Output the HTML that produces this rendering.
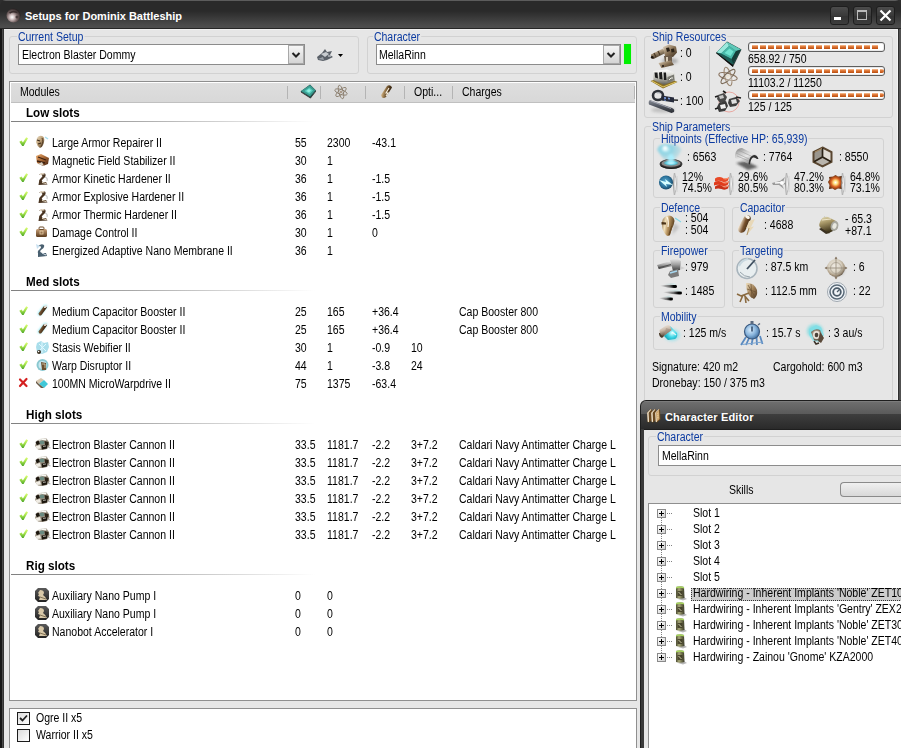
<!DOCTYPE html><html><head><meta charset="utf-8"><style>
*{margin:0;padding:0;box-sizing:content-box}
html,body{width:901px;height:748px;overflow:hidden;background:#2e2e2e}
body{position:relative;font-family:"Liberation Sans",sans-serif;font-size:11px;color:#000}
.t{position:absolute;white-space:pre;line-height:13px;font-size:12px;transform:scaleX(0.877);transform-origin:0 0}
.b{font-weight:bold;transform:scaleX(0.97)}
.glab{color:#0b3aa0;background:#e6e6e6;padding:0 1px;margin-left:-1px}
.grp{position:absolute;border:1px solid #d2d2d2;border-radius:3px}
.ic{position:absolute;overflow:visible}
</style></head><body><div style="position:absolute;left:0px;top:0px;width:901px;height:29px;background:linear-gradient(#5c5c5c 0px,#5c5c5c 1px,#2a2a2a 1px,#2a2a2a 11px,#4a4a4a 25px,#4e4e4e 28px,#262626 28px);border-radius:6px 6px 0 0"></div>
<svg class="ic" style="left:6px;top:8px" width="15" height="15" viewBox="0 0 15 15"><defs><filter id="sb" x="-30%" y="-30%" width="160%" height="160%"><feGaussianBlur stdDeviation="0.45"/></filter><filter id="sb2" x="-50%" y="-50%" width="200%" height="200%"><feGaussianBlur stdDeviation="1.5"/></filter></defs><defs><radialGradient id="r1" cx="0.4" cy="0.62" r="0.62"><stop offset="0" stop-color="#ffffff" /><stop offset="0.25" stop-color="#d8c8c8" /><stop offset="0.6" stop-color="#7a6868" /><stop offset="1" stop-color="#2a2222" /></radialGradient></defs><circle cx="7.5" cy="7.5" r="7" fill="url(#r1)"/><g filter="url(#sb)"><path d="M3.5 5 Q7 2.5 11.5 4.5" stroke="#3a2e2e" stroke-width="1.6" fill="none"/><circle cx="11" cy="9" r="1.5" fill="#4a3c3c"/></g></svg>
<div class="t b" style="left:25px;top:10px;font-size:11px;color:#fff;transform:none">Setups for Dominix Battleship</div>
<div style="position:absolute;left:830px;top:6px;width:19px;height:19px;border:1px solid #1e1e1e;border-radius:3px;box-sizing:border-box;background:linear-gradient(#4c4c4c,#3a3a3a 50%,#333 51%,#3c3c3c)"></div>
<div style="position:absolute;left:853px;top:6px;width:19px;height:19px;border:1px solid #1e1e1e;border-radius:3px;box-sizing:border-box;background:linear-gradient(#4c4c4c,#3a3a3a 50%,#333 51%,#3c3c3c)"></div>
<div style="position:absolute;left:876px;top:6px;width:19px;height:19px;border:1px solid #1e1e1e;border-radius:3px;box-sizing:border-box;background:linear-gradient(#4c4c4c,#3a3a3a 50%,#333 51%,#3c3c3c)"></div>
<div style="position:absolute;left:834px;top:17px;width:7px;height:3px;background:#fff"></div>
<div style="position:absolute;left:857px;top:10px;width:10px;height:10px;border:1px solid #bbb;border-top:2px solid #bbb;box-sizing:border-box"></div>
<svg class="ic" style="left:879px;top:9px" width="13" height="13" viewBox="0 0 13 13"><path d="M1.5 1.5L11.5 11.5M11.5 1.5L1.5 11.5" stroke="#fff" stroke-width="2.2"/></svg>
<div style="position:absolute;left:0px;top:29px;width:901px;height:719px;background:linear-gradient(90deg,#161616 0,#161616 2px,#4a4a4a 2px,#4a4a4a 3px,#343434 3px,#343434 4px,transparent 4px,transparent 898px,#2e2e2e 898px,#2e2e2e 899px,#505050 899px)"></div>
<div style="position:absolute;left:4px;top:29px;width:894px;height:719px;background:#e6e6e6;border-top:1px solid #efefef;border-right:1px solid #f2f2f2;box-sizing:border-box"></div>
<div class="grp" style="left:9px;top:36px;width:348px;height:36px"></div>
<div class="t glab" style="left:18px;top:31px">Current Setup</div>
<div style="position:absolute;left:18px;top:44px;width:287px;height:21px;border:1px solid #8c8c8c;background:#fff;box-sizing:border-box"></div>
<div class="t " style="left:22px;top:49px;">Electron Blaster Dommy</div>
<div style="position:absolute;left:288px;top:45px;width:16px;height:19px;border:1px solid #a8a8a8;box-sizing:border-box;background:linear-gradient(#f6f6f6,#d4d4d4)"></div>
<svg class="ic" style="left:291px;top:51px" width="10" height="8" viewBox="0 0 10 8"><path d="M1.5 2L5 5.5L8.5 2" stroke="#222" stroke-width="2" fill="none"/></svg>
<svg class="ic" style="left:316px;top:48px" width="18" height="14" viewBox="0 0 18 14"><path d="M1 9 L6 5 L9 1 L11 4 L16 3 L14 7 L17 9 L11 12 L7 13 L2 12Z" fill="#5a6068"/><path d="M5 6 L10 4 L13 6 L9 9Z" fill="#c8ccd0"/><path d="M2 11 L7 9 L8 12Z" fill="#9aa0a8"/><path d="M12 8 L15 8" stroke="#e0e4e8" stroke-width="1"/></svg>
<svg class="ic" style="left:338px;top:54px" width="5" height="3" viewBox="0 0 5 3"><path d="M0 0H5L2.5 3Z" fill="#000"/></svg>
<div class="grp" style="left:367px;top:36px;width:268px;height:36px"></div>
<div class="t glab" style="left:374px;top:31px">Character</div>
<div style="position:absolute;left:376px;top:44px;width:245px;height:21px;border:1px solid #8c8c8c;background:#fff;box-sizing:border-box"></div>
<div class="t " style="left:379px;top:49px;">MellaRinn</div>
<div style="position:absolute;left:603px;top:45px;width:17px;height:19px;border:1px solid #a8a8a8;box-sizing:border-box;background:linear-gradient(#f6f6f6,#d4d4d4)"></div>
<svg class="ic" style="left:606px;top:51px" width="10" height="8" viewBox="0 0 10 8"><path d="M1.5 2L5 5.5L8.5 2" stroke="#222" stroke-width="2" fill="none"/></svg>
<div style="position:absolute;left:624px;top:44px;width:7px;height:20px;background:#00f000;box-shadow:0 0 1px #b0f0b0"></div>
<div style="position:absolute;left:9px;top:81px;width:628px;height:620px;border:1px solid #8f8f8f;background:#fff;box-sizing:border-box"></div>
<div style="position:absolute;left:11px;top:83px;width:624px;height:20px;background:linear-gradient(#dedede,#d8d8d8);border-bottom:1px solid #c0c0c0;box-sizing:border-box"></div>
<div style="position:absolute;left:287px;top:86px;width:1px;height:13px;background:#b4b4b4"></div>
<div style="position:absolute;left:320px;top:86px;width:1px;height:13px;background:#b4b4b4"></div>
<div style="position:absolute;left:365px;top:86px;width:1px;height:13px;background:#b4b4b4"></div>
<div style="position:absolute;left:404px;top:86px;width:1px;height:13px;background:#b4b4b4"></div>
<div style="position:absolute;left:452px;top:86px;width:1px;height:13px;background:#b4b4b4"></div>
<div style="position:absolute;left:634px;top:86px;width:1px;height:13px;background:#b4b4b4"></div>
<div class="t " style="left:20px;top:86px;">Modules</div>
<div class="t " style="left:414px;top:86px;">Opti...</div>
<div class="t " style="left:462px;top:86px;">Charges</div>
<svg class="ic" style="left:300px;top:84px" width="17" height="15" viewBox="0 0 17 15"><path d="M10 0.5 L16 6.5 L10.5 14 L0.5 7.5Z" fill="#1c4c48"/><path d="M10 1 L15.5 6.3 L10 12.5 L1 7Z" fill="#3c9c90"/><path d="M9.5 3.5 L13 6.5 L9.5 10 L4.5 7Z" fill="#58d0c0"/><path d="M9 5 L11 6.5 L9 8.5 L6.5 7Z" fill="#90f0e0"/><path d="M1 7.5 L10.5 13.5 L10.5 14.5 L1 8.5Z" fill="#383838"/><path d="M10.5 13.5 L16 6.5 L16 7.5 L10.5 14.5Z" fill="#202020"/></svg>
<svg class="ic" style="left:333px;top:84px" width="16" height="16" viewBox="0 0 16 16"><g fill="none" stroke="#8c8070" stroke-width="0.9"><ellipse cx="8" cy="8" rx="6.5" ry="2.4" transform="rotate(20 8 8)"/><ellipse cx="8" cy="8" rx="7" ry="2.2" transform="rotate(75 8 8)"/><ellipse cx="8" cy="8" rx="6.5" ry="2.4" transform="rotate(-40 8 8)"/></g><circle cx="8" cy="8" r="1.2" fill="#a89888"/></svg>
<svg class="ic" style="left:380px;top:84px" width="13" height="15" viewBox="0 0 13 15"><defs><linearGradient id="l2" x1="0" y1="0" x2="1" y2="0.3"><stop offset="0" stop-color="#fff4e0"/><stop offset="0.35" stop-color="#b89868"/><stop offset="0.7" stop-color="#5a4020"/><stop offset="1" stop-color="#2a1c0c"/></linearGradient></defs><path d="M1 11 L7 2 Q9 0.5 11 2 L12 3.5 L6 13 Q4 14.5 2 13.5Z" fill="url(#l2)"/><path d="M9 4 L6 9 L8 9 L6 12" stroke="#f8f0e0" stroke-width="1.1" fill="none"/></svg>
<div class="t b" style="left:26px;top:107px;">Low slots</div>
<div style="position:absolute;left:11px;top:121px;width:304px;height:1px;background:linear-gradient(90deg,#808080,#a8a8a8 40%,#fff)"></div>
<svg class="ic" style="left:19px;top:137px" width="10" height="10" viewBox="0 0 10 10"><defs><linearGradient id="l3" x1="0" y1="0" x2="0" y2="1"><stop offset="0" stop-color="#e0ff78"/><stop offset="0.5" stop-color="#a0e048"/><stop offset="1" stop-color="#50a828"/></linearGradient></defs><path d="M0.3 4.8 L2.6 3.6 L3.9 5.6 L7.2 0.3 L9 1.3 L4.6 8.9 L3.2 8.9Z" fill="url(#l3)"/></svg>
<svg class="ic" style="left:35px;top:135px" width="14" height="14" viewBox="0 0 14 14"><defs><linearGradient id="l4" x1="0" y1="0" x2="1" y2="1"><stop offset="0" stop-color="#f0e4cc"/><stop offset="0.5" stop-color="#b89a70"/><stop offset="1" stop-color="#3a2a18"/></linearGradient></defs><path d="M2 3 Q4 0 7 1 Q10 2 9 7 Q8 12 5 13 Q2 11 1 7Z" fill="url(#l4)"/><path d="M2 5 L5 6 M3 9 L6 8" stroke="#3a2818" stroke-width="1.2"/><path d="M7 3 Q9 6 6 12" stroke="#5a4028" stroke-width="1" fill="none"/><path d="M10 2 L13 4" stroke="#a8e0f0" stroke-width="1.5"/></svg>
<div class="t " style="left:52px;top:137px;">Large Armor Repairer II</div>
<div class="t " style="left:295px;top:137px;">55</div>
<div class="t " style="left:327px;top:137px;">2300</div>
<div class="t " style="left:372px;top:137px;">-43.1</div>
<div class="t " style="left:411px;top:137px;"></div>
<div class="t " style="left:459px;top:137px;"></div>
<svg class="ic" style="left:35px;top:153px" width="15" height="14" viewBox="0 0 15 14"><defs><linearGradient id="l5" x1="0" y1="0" x2="1" y2="1"><stop offset="0" stop-color="#f0b070"/><stop offset="0.5" stop-color="#a06030"/><stop offset="1" stop-color="#402010"/></linearGradient></defs><path d="M1 3 L6 1 L14 5 L13 11 L8 13 L2 10Z" fill="url(#l5)"/><path d="M3 4 L11 7 M2 8 L10 10" stroke="#3a2010" stroke-width="1.3"/><path d="M3 11 L7 9 L9 13Z" fill="#d8d0c0"/></svg>
<div class="t " style="left:52px;top:155px;">Magnetic Field Stabilizer II</div>
<div class="t " style="left:295px;top:155px;">30</div>
<div class="t " style="left:327px;top:155px;">1</div>
<div class="t " style="left:372px;top:155px;"></div>
<div class="t " style="left:411px;top:155px;"></div>
<div class="t " style="left:459px;top:155px;"></div>
<svg class="ic" style="left:19px;top:173px" width="10" height="10" viewBox="0 0 10 10"><defs><linearGradient id="l6" x1="0" y1="0" x2="0" y2="1"><stop offset="0" stop-color="#e0ff78"/><stop offset="0.5" stop-color="#a0e048"/><stop offset="1" stop-color="#50a828"/></linearGradient></defs><path d="M0.3 4.8 L2.6 3.6 L3.9 5.6 L7.2 0.3 L9 1.3 L4.6 8.9 L3.2 8.9Z" fill="url(#l6)"/></svg>
<svg class="ic" style="left:37px;top:172px" width="12" height="14" viewBox="0 0 12 14"><defs><filter id="hb" x="-20%" y="-20%" width="140%" height="140%"><feGaussianBlur stdDeviation="0.3"/></filter></defs><g filter="url(#hb)"><path d="M2 3 Q5 0 8 1.5 Q10 4 6 7 Q3.5 9 6 10 L9 10 L10.5 12.5 L1.5 13 L2 10 Q1.5 8 4 6 Q6.5 4 4.5 3Z" fill="#4a3420"/><path d="M3 2.8 Q5 1.2 7.5 2" stroke="#f0e4d0" stroke-width="1.3" fill="none"/><path d="M5 10.5 L9.5 11.5" stroke="#f0e4d0" stroke-width="1.1"/><path d="M8 5 Q11 6 10 9" stroke="#c8c8c8" stroke-width="1.2" fill="none"/></g></svg>
<div class="t " style="left:52px;top:173px;">Armor Kinetic Hardener II</div>
<div class="t " style="left:295px;top:173px;">36</div>
<div class="t " style="left:327px;top:173px;">1</div>
<div class="t " style="left:372px;top:173px;">-1.5</div>
<div class="t " style="left:411px;top:173px;"></div>
<div class="t " style="left:459px;top:173px;"></div>
<svg class="ic" style="left:19px;top:191px" width="10" height="10" viewBox="0 0 10 10"><defs><linearGradient id="l7" x1="0" y1="0" x2="0" y2="1"><stop offset="0" stop-color="#e0ff78"/><stop offset="0.5" stop-color="#a0e048"/><stop offset="1" stop-color="#50a828"/></linearGradient></defs><path d="M0.3 4.8 L2.6 3.6 L3.9 5.6 L7.2 0.3 L9 1.3 L4.6 8.9 L3.2 8.9Z" fill="url(#l7)"/></svg>
<svg class="ic" style="left:37px;top:190px" width="12" height="14" viewBox="0 0 12 14"><defs><filter id="hb" x="-20%" y="-20%" width="140%" height="140%"><feGaussianBlur stdDeviation="0.3"/></filter></defs><g filter="url(#hb)"><path d="M2 3 Q5 0 8 1.5 Q10 4 6 7 Q3.5 9 6 10 L9 10 L10.5 12.5 L1.5 13 L2 10 Q1.5 8 4 6 Q6.5 4 4.5 3Z" fill="#4a3420"/><path d="M3 2.8 Q5 1.2 7.5 2" stroke="#f0e4d0" stroke-width="1.3" fill="none"/><path d="M5 10.5 L9.5 11.5" stroke="#f0e4d0" stroke-width="1.1"/><path d="M8 5 Q11 6 10 9" stroke="#c8c8c8" stroke-width="1.2" fill="none"/></g></svg>
<div class="t " style="left:52px;top:191px;">Armor Explosive Hardener II</div>
<div class="t " style="left:295px;top:191px;">36</div>
<div class="t " style="left:327px;top:191px;">1</div>
<div class="t " style="left:372px;top:191px;">-1.5</div>
<div class="t " style="left:411px;top:191px;"></div>
<div class="t " style="left:459px;top:191px;"></div>
<svg class="ic" style="left:19px;top:209px" width="10" height="10" viewBox="0 0 10 10"><defs><linearGradient id="l8" x1="0" y1="0" x2="0" y2="1"><stop offset="0" stop-color="#e0ff78"/><stop offset="0.5" stop-color="#a0e048"/><stop offset="1" stop-color="#50a828"/></linearGradient></defs><path d="M0.3 4.8 L2.6 3.6 L3.9 5.6 L7.2 0.3 L9 1.3 L4.6 8.9 L3.2 8.9Z" fill="url(#l8)"/></svg>
<svg class="ic" style="left:37px;top:208px" width="12" height="14" viewBox="0 0 12 14"><defs><filter id="hb" x="-20%" y="-20%" width="140%" height="140%"><feGaussianBlur stdDeviation="0.3"/></filter></defs><g filter="url(#hb)"><path d="M2 3 Q5 0 8 1.5 Q10 4 6 7 Q3.5 9 6 10 L9 10 L10.5 12.5 L1.5 13 L2 10 Q1.5 8 4 6 Q6.5 4 4.5 3Z" fill="#4a3420"/><path d="M3 2.8 Q5 1.2 7.5 2" stroke="#f0e4d0" stroke-width="1.3" fill="none"/><path d="M5 10.5 L9.5 11.5" stroke="#f0e4d0" stroke-width="1.1"/><path d="M8 5 Q11 6 10 9" stroke="#c8c8c8" stroke-width="1.2" fill="none"/></g></svg>
<div class="t " style="left:52px;top:209px;">Armor Thermic Hardener II</div>
<div class="t " style="left:295px;top:209px;">36</div>
<div class="t " style="left:327px;top:209px;">1</div>
<div class="t " style="left:372px;top:209px;">-1.5</div>
<div class="t " style="left:411px;top:209px;"></div>
<div class="t " style="left:459px;top:209px;"></div>
<svg class="ic" style="left:19px;top:227px" width="10" height="10" viewBox="0 0 10 10"><defs><linearGradient id="l9" x1="0" y1="0" x2="0" y2="1"><stop offset="0" stop-color="#e0ff78"/><stop offset="0.5" stop-color="#a0e048"/><stop offset="1" stop-color="#50a828"/></linearGradient></defs><path d="M0.3 4.8 L2.6 3.6 L3.9 5.6 L7.2 0.3 L9 1.3 L4.6 8.9 L3.2 8.9Z" fill="url(#l9)"/></svg>
<svg class="ic" style="left:35px;top:226px" width="13" height="12" viewBox="0 0 13 12"><defs><linearGradient id="l10" x1="0" y1="0" x2="0" y2="1"><stop offset="0" stop-color="#c8a078"/><stop offset="1" stop-color="#5a3a1c"/></linearGradient></defs><rect x="1" y="3" width="11" height="8" rx="1.5" fill="url(#l10)"/><rect x="4" y="1" width="5" height="2.5" rx="1" fill="none" stroke="#6a4a2a" stroke-width="1"/><rect x="5" y="5" width="3" height="3" fill="none" stroke="#e8d0a8" stroke-width="0.8"/></svg>
<div class="t " style="left:52px;top:227px;">Damage Control II</div>
<div class="t " style="left:295px;top:227px;">30</div>
<div class="t " style="left:327px;top:227px;">1</div>
<div class="t " style="left:372px;top:227px;">0</div>
<div class="t " style="left:411px;top:227px;"></div>
<div class="t " style="left:459px;top:227px;"></div>
<svg class="ic" style="left:35px;top:243px" width="14" height="15" viewBox="0 0 14 15"><path d="M2 4 Q6 0 9 2 Q10 5 6 7 Q4 9 7 10 L11 10 L12 13 L3 14 L3 10 Q2 8 5 6 Q7 4 5 3Z" fill="#4a6070"/><path d="M1 1 L5 3 L2 6Z" fill="#c8e0f0"/><path d="M7 10 L11 12" stroke="#e0e8f0" stroke-width="1"/></svg>
<div class="t " style="left:52px;top:245px;">Energized Adaptive Nano Membrane II</div>
<div class="t " style="left:295px;top:245px;">36</div>
<div class="t " style="left:327px;top:245px;">1</div>
<div class="t " style="left:372px;top:245px;"></div>
<div class="t " style="left:411px;top:245px;"></div>
<div class="t " style="left:459px;top:245px;"></div>
<div class="t b" style="left:26px;top:276px;">Med slots</div>
<div style="position:absolute;left:11px;top:290px;width:304px;height:1px;background:linear-gradient(90deg,#808080,#a8a8a8 40%,#fff)"></div>
<svg class="ic" style="left:19px;top:306px" width="10" height="10" viewBox="0 0 10 10"><defs><linearGradient id="l11" x1="0" y1="0" x2="0" y2="1"><stop offset="0" stop-color="#e0ff78"/><stop offset="0.5" stop-color="#a0e048"/><stop offset="1" stop-color="#50a828"/></linearGradient></defs><path d="M0.3 4.8 L2.6 3.6 L3.9 5.6 L7.2 0.3 L9 1.3 L4.6 8.9 L3.2 8.9Z" fill="url(#l11)"/></svg>
<svg class="ic" style="left:36px;top:304px" width="13" height="13" viewBox="0 0 13 13"><defs><filter id="glw" x="-50%" y="-50%" width="200%" height="200%"><feGaussianBlur stdDeviation="1"/></filter></defs><path d="M2 9 L8 1.5 Q10 0.5 11.5 2 L5 11 Q3 12 2 10.5Z" fill="#60e0f0" opacity="0.7" filter="url(#glw)"/><defs><linearGradient id="l12" x1="0" y1="0" x2="1" y2="0.5"><stop offset="0" stop-color="#2a1a0c"/><stop offset="0.4" stop-color="#7a5a3a"/><stop offset="0.7" stop-color="#4a3018"/><stop offset="1" stop-color="#1a0e04"/></linearGradient></defs><path d="M2.5 9.5 L7.5 2.5 Q9 1.3 10.5 2.5 L11 3.5 L5.5 11 Q4 12 3 11Z" fill="url(#l12)"/><ellipse cx="9.5" cy="2.6" rx="1.8" ry="1.1" transform="rotate(-35 9.5 2.6)" fill="#e8e0d8"/></svg>
<div class="t " style="left:52px;top:306px;">Medium Capacitor Booster II</div>
<div class="t " style="left:295px;top:306px;">25</div>
<div class="t " style="left:327px;top:306px;">165</div>
<div class="t " style="left:372px;top:306px;">+36.4</div>
<div class="t " style="left:411px;top:306px;"></div>
<div class="t " style="left:459px;top:306px;">Cap Booster 800</div>
<svg class="ic" style="left:19px;top:324px" width="10" height="10" viewBox="0 0 10 10"><defs><linearGradient id="l13" x1="0" y1="0" x2="0" y2="1"><stop offset="0" stop-color="#e0ff78"/><stop offset="0.5" stop-color="#a0e048"/><stop offset="1" stop-color="#50a828"/></linearGradient></defs><path d="M0.3 4.8 L2.6 3.6 L3.9 5.6 L7.2 0.3 L9 1.3 L4.6 8.9 L3.2 8.9Z" fill="url(#l13)"/></svg>
<svg class="ic" style="left:36px;top:322px" width="13" height="13" viewBox="0 0 13 13"><defs><filter id="glw" x="-50%" y="-50%" width="200%" height="200%"><feGaussianBlur stdDeviation="1"/></filter></defs><path d="M2 9 L8 1.5 Q10 0.5 11.5 2 L5 11 Q3 12 2 10.5Z" fill="#60e0f0" opacity="0.7" filter="url(#glw)"/><defs><linearGradient id="l14" x1="0" y1="0" x2="1" y2="0.5"><stop offset="0" stop-color="#2a1a0c"/><stop offset="0.4" stop-color="#7a5a3a"/><stop offset="0.7" stop-color="#4a3018"/><stop offset="1" stop-color="#1a0e04"/></linearGradient></defs><path d="M2.5 9.5 L7.5 2.5 Q9 1.3 10.5 2.5 L11 3.5 L5.5 11 Q4 12 3 11Z" fill="url(#l14)"/><ellipse cx="9.5" cy="2.6" rx="1.8" ry="1.1" transform="rotate(-35 9.5 2.6)" fill="#e8e0d8"/></svg>
<div class="t " style="left:52px;top:324px;">Medium Capacitor Booster II</div>
<div class="t " style="left:295px;top:324px;">25</div>
<div class="t " style="left:327px;top:324px;">165</div>
<div class="t " style="left:372px;top:324px;">+36.4</div>
<div class="t " style="left:411px;top:324px;"></div>
<div class="t " style="left:459px;top:324px;">Cap Booster 800</div>
<svg class="ic" style="left:19px;top:342px" width="10" height="10" viewBox="0 0 10 10"><defs><linearGradient id="l15" x1="0" y1="0" x2="0" y2="1"><stop offset="0" stop-color="#e0ff78"/><stop offset="0.5" stop-color="#a0e048"/><stop offset="1" stop-color="#50a828"/></linearGradient></defs><path d="M0.3 4.8 L2.6 3.6 L3.9 5.6 L7.2 0.3 L9 1.3 L4.6 8.9 L3.2 8.9Z" fill="url(#l15)"/></svg>
<svg class="ic" style="left:35px;top:340px" width="15" height="15" viewBox="0 0 15 15"><path d="M2 3 L6 1 L9 3 L13 2 L14 7 L12 12 L7 14 L2 12 L1 7Z" fill="#9ad8e8" opacity="0.85"/><path d="M4 4 L11 11 M11 4 L4 11 M7 2 L7 13" stroke="#e0f8ff" stroke-width="1"/><circle cx="4" cy="12" r="2" fill="#3a3020"/><circle cx="3.6" cy="11.5" r="0.8" fill="#fff"/></svg>
<div class="t " style="left:52px;top:342px;">Stasis Webifier II</div>
<div class="t " style="left:295px;top:342px;">30</div>
<div class="t " style="left:327px;top:342px;">1</div>
<div class="t " style="left:372px;top:342px;">-0.9</div>
<div class="t " style="left:411px;top:342px;">10</div>
<div class="t " style="left:459px;top:342px;"></div>
<svg class="ic" style="left:19px;top:360px" width="10" height="10" viewBox="0 0 10 10"><defs><linearGradient id="l16" x1="0" y1="0" x2="0" y2="1"><stop offset="0" stop-color="#e0ff78"/><stop offset="0.5" stop-color="#a0e048"/><stop offset="1" stop-color="#50a828"/></linearGradient></defs><path d="M0.3 4.8 L2.6 3.6 L3.9 5.6 L7.2 0.3 L9 1.3 L4.6 8.9 L3.2 8.9Z" fill="url(#l16)"/></svg>
<svg class="ic" style="left:36px;top:358px" width="14" height="14" viewBox="0 0 14 14"><circle cx="6.5" cy="7" r="6" fill="#8ac8d0"/><circle cx="6.5" cy="7" r="4" fill="#c8e8f0"/><path d="M5 4 L10 5 L10 12 L6 12Z" fill="#6a5030"/><path d="M6 6 L9 6 L9 10" stroke="#e0d0b0" stroke-width="0.8" fill="none"/></svg>
<div class="t " style="left:52px;top:360px;">Warp Disruptor II</div>
<div class="t " style="left:295px;top:360px;">44</div>
<div class="t " style="left:327px;top:360px;">1</div>
<div class="t " style="left:372px;top:360px;">-3.8</div>
<div class="t " style="left:411px;top:360px;">24</div>
<div class="t " style="left:459px;top:360px;"></div>
<svg class="ic" style="left:19px;top:378px" width="9" height="9" viewBox="0 0 9 9"><path d="M1 1.5L7.5 8M7.5 1L1 8" stroke="#d42020" stroke-width="2.2" stroke-linecap="round"/></svg>
<svg class="ic" style="left:35px;top:377px" width="14" height="12" viewBox="0 0 14 12"><path d="M1 4 L6 1 L9 3 L4 7Z" fill="#d8c8b0"/><path d="M4 7 L9 3 L13 7 L9 11Z" fill="#40c8d8"/><path d="M1 4 L4 7 L9 11 L6 11 L1 6Z" fill="#6a5a48"/></svg>
<div class="t " style="left:52px;top:378px;">100MN MicroWarpdrive II</div>
<div class="t " style="left:295px;top:378px;">75</div>
<div class="t " style="left:327px;top:378px;">1375</div>
<div class="t " style="left:372px;top:378px;">-63.4</div>
<div class="t " style="left:411px;top:378px;"></div>
<div class="t " style="left:459px;top:378px;"></div>
<div class="t b" style="left:26px;top:409px;">High slots</div>
<div style="position:absolute;left:11px;top:423px;width:304px;height:1px;background:linear-gradient(90deg,#808080,#a8a8a8 40%,#fff)"></div>
<svg class="ic" style="left:19px;top:439px" width="10" height="10" viewBox="0 0 10 10"><defs><linearGradient id="l17" x1="0" y1="0" x2="0" y2="1"><stop offset="0" stop-color="#e0ff78"/><stop offset="0.5" stop-color="#a0e048"/><stop offset="1" stop-color="#50a828"/></linearGradient></defs><path d="M0.3 4.8 L2.6 3.6 L3.9 5.6 L7.2 0.3 L9 1.3 L4.6 8.9 L3.2 8.9Z" fill="url(#l17)"/></svg>
<svg class="ic" style="left:34px;top:437px" width="17" height="14" viewBox="0 0 17 14"><defs><filter id="bb" x="-20%" y="-20%" width="140%" height="140%"><feGaussianBlur stdDeviation="0.5"/></filter></defs><g filter="url(#bb)"><path d="M2.5 4 Q7 0.5 12.5 1.5 L15 5 L15.5 9 L13 12 Q8 13.5 4 12.5 L1 9 Z" fill="#9a9080"/><path d="M4 2.5 Q9 0.5 12.5 1.8 L12 3.5 Q8 2.5 4.5 4Z" fill="#f8f8f4"/><path d="M1.5 5 L4.5 3.5 L6 6.5 L3 8.5Z" fill="#1e1810"/><ellipse cx="8" cy="5.5" rx="2.4" ry="2" fill="#6a8a80"/><path d="M10.5 4 L14.5 5 L14.5 8 L11 8.5Z" fill="#2a2014"/><path d="M1.5 9 L6 8 L7 11.5 L3 12Z" fill="#f0ece4"/><path d="M7.5 8.5 L13.5 8 L13 11.5 L8 12.5Z" fill="#1e1810"/><path d="M5 3 L8 2.5 M9 9.5 L12 9" stroke="#d8d8d0" stroke-width="0.7"/><path d="M13.5 10 L16.5 11" stroke="#b8b8b8" stroke-width="1.2"/></g></svg>
<div class="t " style="left:52px;top:439px;">Electron Blaster Cannon II</div>
<div class="t " style="left:295px;top:439px;">33.5</div>
<div class="t " style="left:327px;top:439px;">1181.7</div>
<div class="t " style="left:372px;top:439px;">-2.2</div>
<div class="t " style="left:411px;top:439px;">3+7.2</div>
<div class="t " style="left:459px;top:439px;">Caldari Navy Antimatter Charge L</div>
<svg class="ic" style="left:19px;top:457px" width="10" height="10" viewBox="0 0 10 10"><defs><linearGradient id="l18" x1="0" y1="0" x2="0" y2="1"><stop offset="0" stop-color="#e0ff78"/><stop offset="0.5" stop-color="#a0e048"/><stop offset="1" stop-color="#50a828"/></linearGradient></defs><path d="M0.3 4.8 L2.6 3.6 L3.9 5.6 L7.2 0.3 L9 1.3 L4.6 8.9 L3.2 8.9Z" fill="url(#l18)"/></svg>
<svg class="ic" style="left:34px;top:455px" width="17" height="14" viewBox="0 0 17 14"><defs><filter id="bb" x="-20%" y="-20%" width="140%" height="140%"><feGaussianBlur stdDeviation="0.5"/></filter></defs><g filter="url(#bb)"><path d="M2.5 4 Q7 0.5 12.5 1.5 L15 5 L15.5 9 L13 12 Q8 13.5 4 12.5 L1 9 Z" fill="#9a9080"/><path d="M4 2.5 Q9 0.5 12.5 1.8 L12 3.5 Q8 2.5 4.5 4Z" fill="#f8f8f4"/><path d="M1.5 5 L4.5 3.5 L6 6.5 L3 8.5Z" fill="#1e1810"/><ellipse cx="8" cy="5.5" rx="2.4" ry="2" fill="#6a8a80"/><path d="M10.5 4 L14.5 5 L14.5 8 L11 8.5Z" fill="#2a2014"/><path d="M1.5 9 L6 8 L7 11.5 L3 12Z" fill="#f0ece4"/><path d="M7.5 8.5 L13.5 8 L13 11.5 L8 12.5Z" fill="#1e1810"/><path d="M5 3 L8 2.5 M9 9.5 L12 9" stroke="#d8d8d0" stroke-width="0.7"/><path d="M13.5 10 L16.5 11" stroke="#b8b8b8" stroke-width="1.2"/></g></svg>
<div class="t " style="left:52px;top:457px;">Electron Blaster Cannon II</div>
<div class="t " style="left:295px;top:457px;">33.5</div>
<div class="t " style="left:327px;top:457px;">1181.7</div>
<div class="t " style="left:372px;top:457px;">-2.2</div>
<div class="t " style="left:411px;top:457px;">3+7.2</div>
<div class="t " style="left:459px;top:457px;">Caldari Navy Antimatter Charge L</div>
<svg class="ic" style="left:19px;top:475px" width="10" height="10" viewBox="0 0 10 10"><defs><linearGradient id="l19" x1="0" y1="0" x2="0" y2="1"><stop offset="0" stop-color="#e0ff78"/><stop offset="0.5" stop-color="#a0e048"/><stop offset="1" stop-color="#50a828"/></linearGradient></defs><path d="M0.3 4.8 L2.6 3.6 L3.9 5.6 L7.2 0.3 L9 1.3 L4.6 8.9 L3.2 8.9Z" fill="url(#l19)"/></svg>
<svg class="ic" style="left:34px;top:473px" width="17" height="14" viewBox="0 0 17 14"><defs><filter id="bb" x="-20%" y="-20%" width="140%" height="140%"><feGaussianBlur stdDeviation="0.5"/></filter></defs><g filter="url(#bb)"><path d="M2.5 4 Q7 0.5 12.5 1.5 L15 5 L15.5 9 L13 12 Q8 13.5 4 12.5 L1 9 Z" fill="#9a9080"/><path d="M4 2.5 Q9 0.5 12.5 1.8 L12 3.5 Q8 2.5 4.5 4Z" fill="#f8f8f4"/><path d="M1.5 5 L4.5 3.5 L6 6.5 L3 8.5Z" fill="#1e1810"/><ellipse cx="8" cy="5.5" rx="2.4" ry="2" fill="#6a8a80"/><path d="M10.5 4 L14.5 5 L14.5 8 L11 8.5Z" fill="#2a2014"/><path d="M1.5 9 L6 8 L7 11.5 L3 12Z" fill="#f0ece4"/><path d="M7.5 8.5 L13.5 8 L13 11.5 L8 12.5Z" fill="#1e1810"/><path d="M5 3 L8 2.5 M9 9.5 L12 9" stroke="#d8d8d0" stroke-width="0.7"/><path d="M13.5 10 L16.5 11" stroke="#b8b8b8" stroke-width="1.2"/></g></svg>
<div class="t " style="left:52px;top:475px;">Electron Blaster Cannon II</div>
<div class="t " style="left:295px;top:475px;">33.5</div>
<div class="t " style="left:327px;top:475px;">1181.7</div>
<div class="t " style="left:372px;top:475px;">-2.2</div>
<div class="t " style="left:411px;top:475px;">3+7.2</div>
<div class="t " style="left:459px;top:475px;">Caldari Navy Antimatter Charge L</div>
<svg class="ic" style="left:19px;top:493px" width="10" height="10" viewBox="0 0 10 10"><defs><linearGradient id="l20" x1="0" y1="0" x2="0" y2="1"><stop offset="0" stop-color="#e0ff78"/><stop offset="0.5" stop-color="#a0e048"/><stop offset="1" stop-color="#50a828"/></linearGradient></defs><path d="M0.3 4.8 L2.6 3.6 L3.9 5.6 L7.2 0.3 L9 1.3 L4.6 8.9 L3.2 8.9Z" fill="url(#l20)"/></svg>
<svg class="ic" style="left:34px;top:491px" width="17" height="14" viewBox="0 0 17 14"><defs><filter id="bb" x="-20%" y="-20%" width="140%" height="140%"><feGaussianBlur stdDeviation="0.5"/></filter></defs><g filter="url(#bb)"><path d="M2.5 4 Q7 0.5 12.5 1.5 L15 5 L15.5 9 L13 12 Q8 13.5 4 12.5 L1 9 Z" fill="#9a9080"/><path d="M4 2.5 Q9 0.5 12.5 1.8 L12 3.5 Q8 2.5 4.5 4Z" fill="#f8f8f4"/><path d="M1.5 5 L4.5 3.5 L6 6.5 L3 8.5Z" fill="#1e1810"/><ellipse cx="8" cy="5.5" rx="2.4" ry="2" fill="#6a8a80"/><path d="M10.5 4 L14.5 5 L14.5 8 L11 8.5Z" fill="#2a2014"/><path d="M1.5 9 L6 8 L7 11.5 L3 12Z" fill="#f0ece4"/><path d="M7.5 8.5 L13.5 8 L13 11.5 L8 12.5Z" fill="#1e1810"/><path d="M5 3 L8 2.5 M9 9.5 L12 9" stroke="#d8d8d0" stroke-width="0.7"/><path d="M13.5 10 L16.5 11" stroke="#b8b8b8" stroke-width="1.2"/></g></svg>
<div class="t " style="left:52px;top:493px;">Electron Blaster Cannon II</div>
<div class="t " style="left:295px;top:493px;">33.5</div>
<div class="t " style="left:327px;top:493px;">1181.7</div>
<div class="t " style="left:372px;top:493px;">-2.2</div>
<div class="t " style="left:411px;top:493px;">3+7.2</div>
<div class="t " style="left:459px;top:493px;">Caldari Navy Antimatter Charge L</div>
<svg class="ic" style="left:19px;top:511px" width="10" height="10" viewBox="0 0 10 10"><defs><linearGradient id="l21" x1="0" y1="0" x2="0" y2="1"><stop offset="0" stop-color="#e0ff78"/><stop offset="0.5" stop-color="#a0e048"/><stop offset="1" stop-color="#50a828"/></linearGradient></defs><path d="M0.3 4.8 L2.6 3.6 L3.9 5.6 L7.2 0.3 L9 1.3 L4.6 8.9 L3.2 8.9Z" fill="url(#l21)"/></svg>
<svg class="ic" style="left:34px;top:509px" width="17" height="14" viewBox="0 0 17 14"><defs><filter id="bb" x="-20%" y="-20%" width="140%" height="140%"><feGaussianBlur stdDeviation="0.5"/></filter></defs><g filter="url(#bb)"><path d="M2.5 4 Q7 0.5 12.5 1.5 L15 5 L15.5 9 L13 12 Q8 13.5 4 12.5 L1 9 Z" fill="#9a9080"/><path d="M4 2.5 Q9 0.5 12.5 1.8 L12 3.5 Q8 2.5 4.5 4Z" fill="#f8f8f4"/><path d="M1.5 5 L4.5 3.5 L6 6.5 L3 8.5Z" fill="#1e1810"/><ellipse cx="8" cy="5.5" rx="2.4" ry="2" fill="#6a8a80"/><path d="M10.5 4 L14.5 5 L14.5 8 L11 8.5Z" fill="#2a2014"/><path d="M1.5 9 L6 8 L7 11.5 L3 12Z" fill="#f0ece4"/><path d="M7.5 8.5 L13.5 8 L13 11.5 L8 12.5Z" fill="#1e1810"/><path d="M5 3 L8 2.5 M9 9.5 L12 9" stroke="#d8d8d0" stroke-width="0.7"/><path d="M13.5 10 L16.5 11" stroke="#b8b8b8" stroke-width="1.2"/></g></svg>
<div class="t " style="left:52px;top:511px;">Electron Blaster Cannon II</div>
<div class="t " style="left:295px;top:511px;">33.5</div>
<div class="t " style="left:327px;top:511px;">1181.7</div>
<div class="t " style="left:372px;top:511px;">-2.2</div>
<div class="t " style="left:411px;top:511px;">3+7.2</div>
<div class="t " style="left:459px;top:511px;">Caldari Navy Antimatter Charge L</div>
<svg class="ic" style="left:19px;top:529px" width="10" height="10" viewBox="0 0 10 10"><defs><linearGradient id="l22" x1="0" y1="0" x2="0" y2="1"><stop offset="0" stop-color="#e0ff78"/><stop offset="0.5" stop-color="#a0e048"/><stop offset="1" stop-color="#50a828"/></linearGradient></defs><path d="M0.3 4.8 L2.6 3.6 L3.9 5.6 L7.2 0.3 L9 1.3 L4.6 8.9 L3.2 8.9Z" fill="url(#l22)"/></svg>
<svg class="ic" style="left:34px;top:527px" width="17" height="14" viewBox="0 0 17 14"><defs><filter id="bb" x="-20%" y="-20%" width="140%" height="140%"><feGaussianBlur stdDeviation="0.5"/></filter></defs><g filter="url(#bb)"><path d="M2.5 4 Q7 0.5 12.5 1.5 L15 5 L15.5 9 L13 12 Q8 13.5 4 12.5 L1 9 Z" fill="#9a9080"/><path d="M4 2.5 Q9 0.5 12.5 1.8 L12 3.5 Q8 2.5 4.5 4Z" fill="#f8f8f4"/><path d="M1.5 5 L4.5 3.5 L6 6.5 L3 8.5Z" fill="#1e1810"/><ellipse cx="8" cy="5.5" rx="2.4" ry="2" fill="#6a8a80"/><path d="M10.5 4 L14.5 5 L14.5 8 L11 8.5Z" fill="#2a2014"/><path d="M1.5 9 L6 8 L7 11.5 L3 12Z" fill="#f0ece4"/><path d="M7.5 8.5 L13.5 8 L13 11.5 L8 12.5Z" fill="#1e1810"/><path d="M5 3 L8 2.5 M9 9.5 L12 9" stroke="#d8d8d0" stroke-width="0.7"/><path d="M13.5 10 L16.5 11" stroke="#b8b8b8" stroke-width="1.2"/></g></svg>
<div class="t " style="left:52px;top:529px;">Electron Blaster Cannon II</div>
<div class="t " style="left:295px;top:529px;">33.5</div>
<div class="t " style="left:327px;top:529px;">1181.7</div>
<div class="t " style="left:372px;top:529px;">-2.2</div>
<div class="t " style="left:411px;top:529px;">3+7.2</div>
<div class="t " style="left:459px;top:529px;">Caldari Navy Antimatter Charge L</div>
<div class="t b" style="left:26px;top:560px;">Rig slots</div>
<div style="position:absolute;left:11px;top:574px;width:304px;height:1px;background:linear-gradient(90deg,#808080,#a8a8a8 40%,#fff)"></div>
<svg class="ic" style="left:34px;top:587px" width="16" height="16" viewBox="0 0 16 16"><defs><linearGradient id="l23" x1="0" y1="0" x2="0" y2="1"><stop offset="0" stop-color="#5a5a5a"/><stop offset="1" stop-color="#222"/></linearGradient></defs><path d="M4 1 L12 1 L15 4 L15 12 L12 15 L4 15 L1 12 L1 4Z" fill="url(#l23)"/><path d="M6 3 Q10 3 10 6 L9 8 Q12 10 13 13 L5 13 L6 10 Q5 9 4 9 L5 7 L4 6Z" fill="#d8c8a8"/><path d="M6 10 L12 12" stroke="#6a5a40" stroke-width="0.8"/></svg>
<div class="t " style="left:52px;top:590px;">Auxiliary Nano Pump I</div>
<div class="t " style="left:295px;top:590px;">0</div>
<div class="t " style="left:327px;top:590px;">0</div>
<div class="t " style="left:372px;top:590px;"></div>
<div class="t " style="left:411px;top:590px;"></div>
<div class="t " style="left:459px;top:590px;"></div>
<svg class="ic" style="left:34px;top:605px" width="16" height="16" viewBox="0 0 16 16"><defs><linearGradient id="l24" x1="0" y1="0" x2="0" y2="1"><stop offset="0" stop-color="#5a5a5a"/><stop offset="1" stop-color="#222"/></linearGradient></defs><path d="M4 1 L12 1 L15 4 L15 12 L12 15 L4 15 L1 12 L1 4Z" fill="url(#l24)"/><path d="M6 3 Q10 3 10 6 L9 8 Q12 10 13 13 L5 13 L6 10 Q5 9 4 9 L5 7 L4 6Z" fill="#d8c8a8"/><path d="M6 10 L12 12" stroke="#6a5a40" stroke-width="0.8"/></svg>
<div class="t " style="left:52px;top:608px;">Auxiliary Nano Pump I</div>
<div class="t " style="left:295px;top:608px;">0</div>
<div class="t " style="left:327px;top:608px;">0</div>
<div class="t " style="left:372px;top:608px;"></div>
<div class="t " style="left:411px;top:608px;"></div>
<div class="t " style="left:459px;top:608px;"></div>
<svg class="ic" style="left:34px;top:623px" width="16" height="16" viewBox="0 0 16 16"><defs><linearGradient id="l25" x1="0" y1="0" x2="0" y2="1"><stop offset="0" stop-color="#5a5a5a"/><stop offset="1" stop-color="#222"/></linearGradient></defs><path d="M4 1 L12 1 L15 4 L15 12 L12 15 L4 15 L1 12 L1 4Z" fill="url(#l25)"/><path d="M6 3 Q10 3 10 6 L9 8 Q12 10 13 13 L5 13 L6 10 Q5 9 4 9 L5 7 L4 6Z" fill="#d8c8a8"/><path d="M6 10 L12 12" stroke="#6a5a40" stroke-width="0.8"/></svg>
<div class="t " style="left:52px;top:626px;">Nanobot Accelerator I</div>
<div class="t " style="left:295px;top:626px;">0</div>
<div class="t " style="left:327px;top:626px;">0</div>
<div class="t " style="left:372px;top:626px;"></div>
<div class="t " style="left:411px;top:626px;"></div>
<div class="t " style="left:459px;top:626px;"></div>
<div style="position:absolute;left:9px;top:708px;width:628px;height:52px;border:1px solid #8f8f8f;background:#fff;box-sizing:border-box"></div>
<div style="position:absolute;left:17px;top:712px;width:13px;height:13px;border:1px solid #1c1c1c;box-sizing:border-box;background:linear-gradient(135deg,#dcdcdc,#fff)"></div>
<svg class="ic" style="left:19px;top:714px" width="9" height="9" viewBox="0 0 9 9"><path d="M1 4L3.5 6.5L8 1.5" stroke="#222" stroke-width="1.8" fill="none"/></svg>
<div class="t " style="left:36px;top:712px;">Ogre II x5</div>
<div style="position:absolute;left:17px;top:729px;width:13px;height:13px;border:1px solid #1c1c1c;box-sizing:border-box;background:linear-gradient(135deg,#dcdcdc,#fff)"></div>
<div class="t " style="left:36px;top:729px;">Warrior II x5</div>
<div class="grp" style="left:644px;top:36px;width:247px;height:80px"></div>
<div class="t glab" style="left:652px;top:31px">Ship Resources</div>
<div style="position:absolute;left:709px;top:46px;width:1px;height:64px;background:#c8c8c8"></div>
<svg class="ic" style="left:649px;top:44px" width="30" height="25" viewBox="0 0 30 25"><defs><filter id="sb" x="-30%" y="-30%" width="160%" height="160%"><feGaussianBlur stdDeviation="0.45"/></filter><filter id="sb2" x="-50%" y="-50%" width="200%" height="200%"><feGaussianBlur stdDeviation="1.5"/></filter></defs><defs><linearGradient id="l26" x1="0" y1="0" x2="0.4" y2="1"><stop offset="0" stop-color="#fbf8f0"/><stop offset="0.45" stop-color="#a89478"/><stop offset="1" stop-color="#3a2e20"/></linearGradient></defs><defs><linearGradient id="l27" x1="0" y1="0" x2="1" y2="1"><stop offset="0" stop-color="#e8dcc8"/><stop offset="0.5" stop-color="#8a7458"/><stop offset="1" stop-color="#3a2c1c"/></linearGradient></defs><ellipse cx="21" cy="17" rx="8" ry="3" fill="#707070" opacity="0.5" filter="url(#sb2)"/><g filter="url(#sb)"><path d="M2 10.5 L14 4.5 L16.5 9 L4.5 15 Q2 15 2 12.5Z" fill="url(#l26)"/><path d="M5 9 L7 13 M9 7 L11 11" stroke="#4a3a28" stroke-width="1.2"/><circle cx="3.2" cy="13.3" r="1.3" fill="#1a1410"/><path d="M14 3 L20 0.5 L27 2.5 L28 8.5 L24 13 L16 12Z" fill="url(#l27)"/><path d="M17 4 L20 3.5 L21 7 L18 8Z M22 5 L25 4.5 L25.5 8 L22.5 8.5Z" fill="#2a2018"/><path d="M15 12 L23 12 L23 19 L16 19Z" fill="#6a5a48"/><path d="M17 13 L19 13 L19 18 L17 18Z" fill="#d8ccb8"/><path d="M9.5 19 L22 16.5 L25 21 L12.5 24Z" fill="url(#l27)"/><circle cx="14" cy="22" r="1" fill="#1a1410"/></g></svg>
<svg class="ic" style="left:650px;top:68px" width="29" height="21" viewBox="0 0 29 21"><defs><filter id="sb" x="-30%" y="-30%" width="160%" height="160%"><feGaussianBlur stdDeviation="0.45"/></filter><filter id="sb2" x="-50%" y="-50%" width="200%" height="200%"><feGaussianBlur stdDeviation="1.5"/></filter></defs><defs><linearGradient id="l28" x1="0" y1="0" x2="0" y2="1"><stop offset="0" stop-color="#ffffff"/><stop offset="0.5" stop-color="#c8c8c0"/><stop offset="1" stop-color="#585850"/></linearGradient></defs><g filter="url(#sb)"><path d="M0.5 13 L13 20.5 L27.5 14 L15 8Z" fill="#8a7028"/><path d="M2 13 L13 19 L26 14" stroke="#e0c860" stroke-width="1" fill="none"/><path d="M3 3 L17 1.5 L25 5 L25 12.5 L14 17 L3.5 12Z" fill="url(#l28)"/><path d="M4.5 4.5 L7.5 4.5 L8 10.5 L5 9.5Z M9 4.5 L12 4 L12.5 11.5 L9.5 11Z M13.5 4.5 L16 4.5 L16.5 12 L14 12Z" fill="#1e1e1e"/><path d="M17.5 9 L24 6.5 L24 12 L17.5 15Z" fill="#7a7a72"/><path d="M19 12 Q21 9 23 10" stroke="#f0f0e8" stroke-width="1" fill="none"/></g></svg>
<svg class="ic" style="left:648px;top:90px" width="31" height="24" viewBox="0 0 31 24"><defs><filter id="sb" x="-30%" y="-30%" width="160%" height="160%"><feGaussianBlur stdDeviation="0.45"/></filter><filter id="sb2" x="-50%" y="-50%" width="200%" height="200%"><feGaussianBlur stdDeviation="1.5"/></filter></defs><defs><linearGradient id="l29" x1="0" y1="0" x2="0" y2="1"><stop offset="0" stop-color="#8a8e98"/><stop offset="0.5" stop-color="#50545e"/><stop offset="1" stop-color="#2a2c32"/></linearGradient></defs><ellipse cx="15" cy="20" rx="12" ry="2.5" fill="#808080" opacity="0.4" filter="url(#sb2)"/><g filter="url(#sb)"><path d="M2 10 L24 18 Q27 19 26 22 L23.5 23 L1 14.5 Q0 11 2 10Z" fill="url(#l29)"/><path d="M3 11 L23 18.5" stroke="#b0b4c0" stroke-width="0.8"/><ellipse cx="10" cy="5.5" rx="5" ry="4.5" fill="none" stroke="#2e3038" stroke-width="2.6"/><path d="M9 3 Q11 2 13 4" stroke="#a0a4b0" stroke-width="0.8" fill="none"/><path d="M13.5 5.5 L26 7.5 L26 12.5 L13.5 10.5Z" fill="#262a3a"/><path d="M16 7 L18 7.3 L18 9 L16 8.8Z M20 7.6 L22 7.9 L22 9.6 L20 9.3Z M16 9.6 L18 9.9 L18 10.8 L16 10.6Z" fill="#7a9ad8"/><path d="M26 10 L30 10.3" stroke="#2a2a2a" stroke-width="1.6"/></g></svg>
<div class="t " style="left:680px;top:47px;">: 0</div>
<div class="t " style="left:680px;top:71px;">: 0</div>
<div class="t " style="left:680px;top:95px;">: 100</div>
<svg class="ic" style="left:714px;top:41px" width="28" height="27" viewBox="0 0 28 27"><defs><filter id="sb" x="-30%" y="-30%" width="160%" height="160%"><feGaussianBlur stdDeviation="0.45"/></filter><filter id="sb2" x="-50%" y="-50%" width="200%" height="200%"><feGaussianBlur stdDeviation="1.5"/></filter></defs><g filter="url(#sb)"><path d="M2 12 L13 0.5 L27.5 8.5 L19 26 Z" fill="#303836"/><path d="M2.5 11.5 L13 1 L27 8.5 L19 23.5Z" fill="#2a8478"/><path d="M2.5 11.5 L13 1 L15 5 L7 12.5Z" fill="#9ae8dc"/><path d="M13 1 L27 8.5 L22 10 L15 5Z" fill="#60c8b8"/><path d="M7 12.5 L15 5 L22 10 L17.5 18Z" fill="#48b8a8"/><path d="M10.5 12 L15.5 7.5 L19.5 10.5 L16.5 15Z" fill="#70e4d0"/><path d="M7 12.5 L17.5 18 L19 23.5 L2.5 11.5Z" fill="#1c5c54"/><path d="M17.5 18 L22 10 L27 8.5 L19 23.5Z" fill="#143c38"/><path d="M2 12 L19 26 L19 24 L2.5 11.5Z" fill="#101010"/></g></svg>
<svg class="ic" style="left:717px;top:65px" width="22" height="23" viewBox="0 0 22 23"><defs><filter id="sb" x="-30%" y="-30%" width="160%" height="160%"><feGaussianBlur stdDeviation="0.45"/></filter><filter id="sb2" x="-50%" y="-50%" width="200%" height="200%"><feGaussianBlur stdDeviation="1.5"/></filter></defs><g filter="url(#sb)" fill="none" stroke-width="1.1"><ellipse cx="11" cy="11.5" rx="9.5" ry="3.2" transform="rotate(15 11 11.5)" stroke="#8a7460"/><ellipse cx="11" cy="11.5" rx="9.5" ry="3.2" transform="rotate(75 11 11.5)" stroke="#9a8670"/><ellipse cx="11" cy="11.5" rx="9.5" ry="3.2" transform="rotate(-45 11 11.5)" stroke="#7a6a58"/></g><circle cx="11" cy="11.5" r="2" fill="#e8e0d0"/><ellipse cx="13" cy="14" rx="4" ry="2" fill="#ffffff" opacity="0.5" filter="url(#sb2)"/></svg>
<svg class="ic" style="left:714px;top:89px" width="28" height="25" viewBox="0 0 28 25"><defs><filter id="sb" x="-30%" y="-30%" width="160%" height="160%"><feGaussianBlur stdDeviation="0.45"/></filter><filter id="sb2" x="-50%" y="-50%" width="200%" height="200%"><feGaussianBlur stdDeviation="1.5"/></filter></defs><circle cx="15" cy="13" r="10" fill="none" stroke="#e8a098" stroke-width="0.9"/><g filter="url(#sb)"><path d="M4 6 L10 4 L13 8 L11 13 L6 14 L3 10Z" fill="#4a4a4a"/><path d="M5 7 L9 6 L10 9 L6 10Z" fill="#c8c8c8"/><path d="M5 14 L12 12 L14 17 L11 22 L5 23 L3 18Z" fill="#3a3a3a"/><path d="M6 16 L11 15 L12 19 L7 20Z" fill="#f0f0f0"/><path d="M15 10 L22 8 L26 12 L22 17 L16 18 L14 14Z" fill="#3e3e3e"/><path d="M17 11 L22 10 L23 14 L18 15Z" fill="#e0e0e0"/><path d="M1 8 L4 7 M22 8 L27 9 M1 20 L4 19 M9 2 L12 4" stroke="#1a1a1a" stroke-width="1.6"/></g></svg>
<div style="position:absolute;left:748px;top:42px;width:137px;height:10px;border:1px solid #5e5e5e;border-radius:3px;background:#fff;box-sizing:border-box;box-shadow:inset 0 0 0 1px #e8e8e8"></div>
<div style="position:absolute;left:752px;top:45px;width:6px;height:4px;background:linear-gradient(#f8c8a0,#e07838 40%,#b84e10)"></div>
<div style="position:absolute;left:760px;top:45px;width:6px;height:4px;background:linear-gradient(#f8c8a0,#e07838 40%,#b84e10)"></div>
<div style="position:absolute;left:768px;top:45px;width:6px;height:4px;background:linear-gradient(#f8c8a0,#e07838 40%,#b84e10)"></div>
<div style="position:absolute;left:776px;top:45px;width:6px;height:4px;background:linear-gradient(#f8c8a0,#e07838 40%,#b84e10)"></div>
<div style="position:absolute;left:784px;top:45px;width:6px;height:4px;background:linear-gradient(#f8c8a0,#e07838 40%,#b84e10)"></div>
<div style="position:absolute;left:792px;top:45px;width:6px;height:4px;background:linear-gradient(#f8c8a0,#e07838 40%,#b84e10)"></div>
<div style="position:absolute;left:800px;top:45px;width:6px;height:4px;background:linear-gradient(#f8c8a0,#e07838 40%,#b84e10)"></div>
<div style="position:absolute;left:808px;top:45px;width:6px;height:4px;background:linear-gradient(#f8c8a0,#e07838 40%,#b84e10)"></div>
<div style="position:absolute;left:816px;top:45px;width:6px;height:4px;background:linear-gradient(#f8c8a0,#e07838 40%,#b84e10)"></div>
<div style="position:absolute;left:824px;top:45px;width:6px;height:4px;background:linear-gradient(#f8c8a0,#e07838 40%,#b84e10)"></div>
<div style="position:absolute;left:832px;top:45px;width:6px;height:4px;background:linear-gradient(#f8c8a0,#e07838 40%,#b84e10)"></div>
<div style="position:absolute;left:840px;top:45px;width:6px;height:4px;background:linear-gradient(#f8c8a0,#e07838 40%,#b84e10)"></div>
<div style="position:absolute;left:848px;top:45px;width:6px;height:4px;background:linear-gradient(#f8c8a0,#e07838 40%,#b84e10)"></div>
<div style="position:absolute;left:856px;top:45px;width:6px;height:4px;background:linear-gradient(#f8c8a0,#e07838 40%,#b84e10)"></div>
<div style="position:absolute;left:864px;top:45px;width:6px;height:4px;background:linear-gradient(#f8c8a0,#e07838 40%,#b84e10)"></div>
<div style="position:absolute;left:872px;top:45px;width:6px;height:4px;background:linear-gradient(#f8c8a0,#e07838 40%,#b84e10)"></div>
<div style="position:absolute;left:748px;top:66px;width:137px;height:10px;border:1px solid #5e5e5e;border-radius:3px;background:#fff;box-sizing:border-box;box-shadow:inset 0 0 0 1px #e8e8e8"></div>
<div style="position:absolute;left:752px;top:69px;width:6px;height:4px;background:linear-gradient(#f8c8a0,#e07838 40%,#b84e10)"></div>
<div style="position:absolute;left:760px;top:69px;width:6px;height:4px;background:linear-gradient(#f8c8a0,#e07838 40%,#b84e10)"></div>
<div style="position:absolute;left:768px;top:69px;width:6px;height:4px;background:linear-gradient(#f8c8a0,#e07838 40%,#b84e10)"></div>
<div style="position:absolute;left:776px;top:69px;width:6px;height:4px;background:linear-gradient(#f8c8a0,#e07838 40%,#b84e10)"></div>
<div style="position:absolute;left:784px;top:69px;width:6px;height:4px;background:linear-gradient(#f8c8a0,#e07838 40%,#b84e10)"></div>
<div style="position:absolute;left:792px;top:69px;width:6px;height:4px;background:linear-gradient(#f8c8a0,#e07838 40%,#b84e10)"></div>
<div style="position:absolute;left:800px;top:69px;width:6px;height:4px;background:linear-gradient(#f8c8a0,#e07838 40%,#b84e10)"></div>
<div style="position:absolute;left:808px;top:69px;width:6px;height:4px;background:linear-gradient(#f8c8a0,#e07838 40%,#b84e10)"></div>
<div style="position:absolute;left:816px;top:69px;width:6px;height:4px;background:linear-gradient(#f8c8a0,#e07838 40%,#b84e10)"></div>
<div style="position:absolute;left:824px;top:69px;width:6px;height:4px;background:linear-gradient(#f8c8a0,#e07838 40%,#b84e10)"></div>
<div style="position:absolute;left:832px;top:69px;width:6px;height:4px;background:linear-gradient(#f8c8a0,#e07838 40%,#b84e10)"></div>
<div style="position:absolute;left:840px;top:69px;width:6px;height:4px;background:linear-gradient(#f8c8a0,#e07838 40%,#b84e10)"></div>
<div style="position:absolute;left:848px;top:69px;width:6px;height:4px;background:linear-gradient(#f8c8a0,#e07838 40%,#b84e10)"></div>
<div style="position:absolute;left:856px;top:69px;width:6px;height:4px;background:linear-gradient(#f8c8a0,#e07838 40%,#b84e10)"></div>
<div style="position:absolute;left:864px;top:69px;width:6px;height:4px;background:linear-gradient(#f8c8a0,#e07838 40%,#b84e10)"></div>
<div style="position:absolute;left:872px;top:69px;width:6px;height:4px;background:linear-gradient(#f8c8a0,#e07838 40%,#b84e10)"></div>
<div style="position:absolute;left:880px;top:69px;width:4px;height:4px;background:linear-gradient(#f8c8a0,#e07838 40%,#b84e10);border-radius:0 2px 2px 0"></div>
<div style="position:absolute;left:748px;top:90px;width:137px;height:10px;border:1px solid #5e5e5e;border-radius:3px;background:#fff;box-sizing:border-box;box-shadow:inset 0 0 0 1px #e8e8e8"></div>
<div style="position:absolute;left:752px;top:93px;width:6px;height:4px;background:linear-gradient(#f8c8a0,#e07838 40%,#b84e10)"></div>
<div style="position:absolute;left:760px;top:93px;width:6px;height:4px;background:linear-gradient(#f8c8a0,#e07838 40%,#b84e10)"></div>
<div style="position:absolute;left:768px;top:93px;width:6px;height:4px;background:linear-gradient(#f8c8a0,#e07838 40%,#b84e10)"></div>
<div style="position:absolute;left:776px;top:93px;width:6px;height:4px;background:linear-gradient(#f8c8a0,#e07838 40%,#b84e10)"></div>
<div style="position:absolute;left:784px;top:93px;width:6px;height:4px;background:linear-gradient(#f8c8a0,#e07838 40%,#b84e10)"></div>
<div style="position:absolute;left:792px;top:93px;width:6px;height:4px;background:linear-gradient(#f8c8a0,#e07838 40%,#b84e10)"></div>
<div style="position:absolute;left:800px;top:93px;width:6px;height:4px;background:linear-gradient(#f8c8a0,#e07838 40%,#b84e10)"></div>
<div style="position:absolute;left:808px;top:93px;width:6px;height:4px;background:linear-gradient(#f8c8a0,#e07838 40%,#b84e10)"></div>
<div style="position:absolute;left:816px;top:93px;width:6px;height:4px;background:linear-gradient(#f8c8a0,#e07838 40%,#b84e10)"></div>
<div style="position:absolute;left:824px;top:93px;width:6px;height:4px;background:linear-gradient(#f8c8a0,#e07838 40%,#b84e10)"></div>
<div style="position:absolute;left:832px;top:93px;width:6px;height:4px;background:linear-gradient(#f8c8a0,#e07838 40%,#b84e10)"></div>
<div style="position:absolute;left:840px;top:93px;width:6px;height:4px;background:linear-gradient(#f8c8a0,#e07838 40%,#b84e10)"></div>
<div style="position:absolute;left:848px;top:93px;width:6px;height:4px;background:linear-gradient(#f8c8a0,#e07838 40%,#b84e10)"></div>
<div style="position:absolute;left:856px;top:93px;width:6px;height:4px;background:linear-gradient(#f8c8a0,#e07838 40%,#b84e10)"></div>
<div style="position:absolute;left:864px;top:93px;width:6px;height:4px;background:linear-gradient(#f8c8a0,#e07838 40%,#b84e10)"></div>
<div style="position:absolute;left:872px;top:93px;width:6px;height:4px;background:linear-gradient(#f8c8a0,#e07838 40%,#b84e10)"></div>
<div style="position:absolute;left:880px;top:93px;width:4px;height:4px;background:linear-gradient(#f8c8a0,#e07838 40%,#b84e10);border-radius:0 2px 2px 0"></div>
<div class="t " style="left:748px;top:53px;">658.92 / 750</div>
<div class="t " style="left:748px;top:77px;">11103.2 / 11250</div>
<div class="t " style="left:748px;top:101px;">125 / 125</div>
<div class="grp" style="left:644px;top:126px;width:247px;height:632px"></div>
<div class="t glab" style="left:652px;top:121px">Ship Parameters</div>
<div class="grp" style="left:653px;top:138px;width:229px;height:58px"></div>
<div class="t glab" style="left:661px;top:133px">Hitpoints (Effective HP: 65,939)</div>
<svg class="ic" style="left:656px;top:143px" width="28" height="27" viewBox="0 0 28 27"><defs><filter id="bl3" x="-20%" y="-20%" width="140%" height="140%"><feGaussianBlur stdDeviation="0.9"/></filter></defs><defs><radialGradient id="r30" cx="0.35" cy="0.3" r="0.75"><stop offset="0" stop-color="#e8ffff" stop-opacity="1"/><stop offset="0.3" stop-color="#78d0e4" stop-opacity="0.8"/><stop offset="0.75" stop-color="#98d0de" stop-opacity="0.5"/><stop offset="1" stop-color="#b8dce4" stop-opacity="0.1"/></radialGradient></defs><defs><radialGradient id="r31" cx="0.5" cy="0.5" r="0.6"><stop offset="0" stop-color="#f0ffff" stop-opacity="1"/><stop offset="0.5" stop-color="#70d8ec" stop-opacity="1"/><stop offset="1" stop-color="#4a8890" stop-opacity="1"/></radialGradient></defs><path d="M1 7 Q2 0 12 1 Q24 1 26 7 Q22 13 19 19 L10 19 Q5 13 1 7Z" fill="url(#r30)" filter="url(#bl3)"/><ellipse cx="15" cy="21" rx="11.5" ry="5" fill="#3a3a3a"/><ellipse cx="15" cy="20.2" rx="9.5" ry="3.6" fill="#8a8a8a"/><ellipse cx="15" cy="20" rx="7" ry="2.4" fill="url(#r31)"/><ellipse cx="15" cy="16" rx="3.5" ry="5" fill="#a8f0ff" opacity="0.9" filter="url(#bl3)"/><circle cx="9" cy="5" r="2.2" fill="#fff" opacity="0.9" filter="url(#bl3)"/><path d="M5 23 Q10 25.5 15 25.5 Q21 25.5 25 23" stroke="#1e1e1e" stroke-width="1.2" fill="none"/></svg>
<div class="t " style="left:687px;top:151px;">: 6563</div>
<svg class="ic" style="left:734px;top:147px" width="26" height="24" viewBox="0 0 26 24"><defs><filter id="bl2" x="-50%" y="-50%" width="200%" height="200%"><feGaussianBlur stdDeviation="1"/></filter></defs><path d="M2 16 L14 23 L24 20 L12 14Z" fill="#2a2a2a" opacity="0.7" filter="url(#bl2)"/><defs><linearGradient id="l32" x1="0" y1="0" x2="0.6" y2="1"><stop offset="0" stop-color="#7a7a7a"/><stop offset="0.35" stop-color="#c8c8c8"/><stop offset="0.6" stop-color="#e8e8e8"/><stop offset="1" stop-color="#8a8a8a"/></linearGradient></defs><path d="M1 8 Q2 1 8 1 L20 7 Q23 7.5 24 11 L20 10 Q16 10 15 17 L1 11Z" fill="url(#l32)"/><path d="M4 3 L17 9 M2 6 L15 12 M3 9 L15 14" stroke="#9a9a9a" stroke-width="0.7" opacity="0.8"/><path d="M14.5 17 Q15 9 20 8 Q23 8 24.5 12 L23 12 Q21 10 19 10.5 Q16.5 12 16 17.5Z" fill="#2e2e2e"/></svg>
<div class="t " style="left:763px;top:151px;">: 7764</div>
<svg class="ic" style="left:812px;top:146px" width="21" height="22" viewBox="0 0 21 22"><defs><filter id="sb" x="-30%" y="-30%" width="160%" height="160%"><feGaussianBlur stdDeviation="0.45"/></filter><filter id="sb2" x="-50%" y="-50%" width="200%" height="200%"><feGaussianBlur stdDeviation="1.5"/></filter></defs><g filter="url(#sb)"><path d="M10.5 1.5 L19.5 6 L19.5 16 L10.5 20.5 L1.5 16 L1.5 6Z" fill="#e0dcd4"/><path d="M10.5 11 L19.5 16 L10.5 20.5 L1.5 16Z" fill="#b8b4ac"/><path d="M10.5 11 L10.5 1.5 L1.5 6 L1.5 16Z" fill="#9a968e"/><path d="M10.5 1.5 L19.5 6 L19.5 16 L10.5 20.5 L1.5 16 L1.5 6Z" fill="none" stroke="#5a4630" stroke-width="2"/><path d="M10.5 11 L10.5 2 M10.5 11 L19 15.7 M10.5 11 L2 15.7" stroke="#2a2014" stroke-width="1.7"/><path d="M3 6 L10 2.5" stroke="#c8a878" stroke-width="0.8"/></g></svg>
<div class="t " style="left:839px;top:151px;">: 8550</div>
<svg class="ic" style="left:658px;top:175px" width="16" height="15" viewBox="0 0 16 15"><defs><radialGradient id="r33" cx="0.45" cy="0.45" r="0.55"><stop offset="0" stop-color="#5ab0d8" /><stop offset="0.7" stop-color="#2a7098" /><stop offset="1" stop-color="#1a4a68" /></radialGradient></defs><circle cx="8" cy="7.5" r="7" fill="url(#r33)"/><path d="M1 5 L8 7 L7 4 L15 10 L8 9 L9 12Z" fill="#d8ffff"/></svg>
<svg class="ic" style="left:673px;top:172px" width="6" height="24" viewBox="0 0 6 24"><path d="M1.5 1 Q0 12 1.5 23" stroke="#8a8a8a" stroke-width="1.2" fill="none"/><path d="M1.5 1 Q5.5 12 1.5 23" stroke="#b8b8b8" stroke-width="1" fill="#f4f4f4"/><path d="M4 4 Q5 12 4 20" stroke="#d0d0d0" stroke-width="0.8" fill="none"/></svg>
<div class="t " style="left:682px;top:171px;">12%</div>
<div class="t " style="left:682px;top:182px;">74.5%</div>
<svg class="ic" style="left:713px;top:176px" width="17" height="14" viewBox="0 0 17 14"><path d="M2 2.5 Q6 0 10 2 Q13 3.5 16 1 L15 4.5 Q12 7 9 5.5 Q6 4 2 5.5Z" fill="#e84a28"/><path d="M1 6.5 Q5 4 9 6 Q12 7.5 16 5 L15 8.5 Q12 11 8.5 9.5 Q5 8 1 9.5Z" fill="#e03c1c"/><path d="M2 10.5 Q6 8 9.5 10 Q12.5 11.5 16 9 L15 12.5 Q12 14.5 8.5 13 Q5 12 2 13Z" fill="#c83018"/><path d="M10 2.5 Q13 4 15.5 2 M9.5 6.5 Q12.5 8 15.5 6 M9.5 10.5 Q12.5 12 15.5 10" stroke="#ff9a70" stroke-width="0.9" fill="none"/></svg>
<svg class="ic" style="left:729px;top:172px" width="6" height="24" viewBox="0 0 6 24"><path d="M1.5 1 Q0 12 1.5 23" stroke="#8a8a8a" stroke-width="1.2" fill="none"/><path d="M1.5 1 Q5.5 12 1.5 23" stroke="#b8b8b8" stroke-width="1" fill="#f4f4f4"/><path d="M4 4 Q5 12 4 20" stroke="#d0d0d0" stroke-width="0.8" fill="none"/></svg>
<div class="t " style="left:738px;top:171px;">29.6%</div>
<div class="t " style="left:738px;top:182px;">80.5%</div>
<svg class="ic" style="left:772px;top:176px" width="14" height="13" viewBox="0 0 14 13"><path d="M0 7 L8 5 L13 1 L11 6 L14 8 L10 9 L12 13 L7 9 L1 9Z" fill="#9a9a9a"/><path d="M3 7 L10 6.5" stroke="#f8f8f8" stroke-width="1.5"/><circle cx="10" cy="7" r="2" fill="#fff"/></svg>
<svg class="ic" style="left:785px;top:172px" width="6" height="24" viewBox="0 0 6 24"><path d="M1.5 1 Q0 12 1.5 23" stroke="#8a8a8a" stroke-width="1.2" fill="none"/><path d="M1.5 1 Q5.5 12 1.5 23" stroke="#b8b8b8" stroke-width="1" fill="#f4f4f4"/><path d="M4 4 Q5 12 4 20" stroke="#d0d0d0" stroke-width="0.8" fill="none"/></svg>
<div class="t " style="left:794px;top:171px;">47.2%</div>
<div class="t " style="left:794px;top:182px;">80.3%</div>
<svg class="ic" style="left:828px;top:175px" width="15" height="15" viewBox="0 0 15 15"><defs><filter id="sb" x="-30%" y="-30%" width="160%" height="160%"><feGaussianBlur stdDeviation="0.45"/></filter><filter id="sb2" x="-50%" y="-50%" width="200%" height="200%"><feGaussianBlur stdDeviation="1.5"/></filter></defs><defs><radialGradient id="r34" cx="0.5" cy="0.5" r="0.55"><stop offset="0" stop-color="#ffffff" /><stop offset="0.25" stop-color="#ffe080" /><stop offset="0.55" stop-color="#d86020" /><stop offset="1" stop-color="#4a2410" /></radialGradient></defs><g filter="url(#sb)"><path d="M1 2 L5 1.5 L7.5 0 L10 1.5 L14 1 L13.5 5 L15 8 L13.5 10 L14 14 L10 13.5 L7 15 L4.5 13.5 L1 14 L1.5 10 L0 7 L1.5 4.5Z" fill="url(#r34)"/></g></svg>
<svg class="ic" style="left:841px;top:172px" width="6" height="24" viewBox="0 0 6 24"><path d="M1.5 1 Q0 12 1.5 23" stroke="#8a8a8a" stroke-width="1.2" fill="none"/><path d="M1.5 1 Q5.5 12 1.5 23" stroke="#b8b8b8" stroke-width="1" fill="#f4f4f4"/><path d="M4 4 Q5 12 4 20" stroke="#d0d0d0" stroke-width="0.8" fill="none"/></svg>
<div class="t " style="left:850px;top:171px;">64.8%</div>
<div class="t " style="left:850px;top:182px;">73.1%</div>
<div class="grp" style="left:653px;top:207px;width:70px;height:33px"></div>
<div class="t glab" style="left:661px;top:202px">Defence</div>
<svg class="ic" style="left:660px;top:215px" width="22" height="23" viewBox="0 0 22 23"><defs><filter id="sb" x="-30%" y="-30%" width="160%" height="160%"><feGaussianBlur stdDeviation="0.45"/></filter><filter id="sb2" x="-50%" y="-50%" width="200%" height="200%"><feGaussianBlur stdDeviation="1.5"/></filter></defs><defs><linearGradient id="l35" x1="0" y1="0" x2="1" y2="0.3"><stop offset="0" stop-color="#8a6a40"/><stop offset="0.35" stop-color="#f4e4c0"/><stop offset="0.6" stop-color="#b89460"/><stop offset="1" stop-color="#5a4020"/></linearGradient></defs><path d="M14 8 L19 12 L12 20Z" fill="#909090" opacity="0.5" filter="url(#sb2)"/><g filter="url(#sb)"><path d="M2 7 Q3 1 9 0.5 Q14 1 14.5 6 Q14 10 12 13 L10 20 Q8 22 6 20 Q2 15 2 11Z" fill="url(#l35)"/><path d="M1.5 7 L6 7.5 L6 9.5 L1.5 9.5Z" fill="#4a3014"/><path d="M7 2 Q9 6 8 12" stroke="#fff8e8" stroke-width="1.2" fill="none"/><path d="M12 11 L9 20" stroke="#6a4a24" stroke-width="1.5"/><path d="M15 3 L21 7" stroke="#80d8e8" stroke-width="1.2"/></g></svg>
<div class="t " style="left:685px;top:212px;">: 504</div>
<div class="t " style="left:685px;top:224px;">: 504</div>
<div class="grp" style="left:732px;top:207px;width:150px;height:33px"></div>
<div class="t glab" style="left:740px;top:202px">Capacitor</div>
<svg class="ic" style="left:736px;top:214px" width="22" height="23" viewBox="0 0 22 23"><defs><filter id="sb" x="-30%" y="-30%" width="160%" height="160%"><feGaussianBlur stdDeviation="0.45"/></filter><filter id="sb2" x="-50%" y="-50%" width="200%" height="200%"><feGaussianBlur stdDeviation="1.5"/></filter></defs><defs><linearGradient id="l36" x1="0" y1="0" x2="1" y2="0.5"><stop offset="0" stop-color="#3a2410"/><stop offset="0.3" stop-color="#f8ecd8"/><stop offset="0.6" stop-color="#7a5430"/><stop offset="1" stop-color="#2a1a0a"/></linearGradient></defs><g filter="url(#sb)"><path d="M2 14 L8 3 Q10 0.5 13 1.5 Q15.5 3 14.5 6 L9 17 Q7 19.5 4 18.5 Q1.5 17 2 14Z" fill="url(#l36)"/><ellipse cx="11.5" cy="3" rx="2.6" ry="1.6" transform="rotate(30 11.5 3)" fill="#f8f4ec"/><path d="M13 7 L19 5 L15 13 L18 12.5 L10 22 L12.5 14 L10 14.5Z" fill="#e8d8b8"/><path d="M13 14 L11 21" stroke="#a08050" stroke-width="0.8"/></g></svg>
<div class="t " style="left:764px;top:219px;">: 4688</div>
<svg class="ic" style="left:818px;top:214px" width="23" height="22" viewBox="0 0 23 22"><defs><filter id="sb" x="-30%" y="-30%" width="160%" height="160%"><feGaussianBlur stdDeviation="0.45"/></filter><filter id="sb2" x="-50%" y="-50%" width="200%" height="200%"><feGaussianBlur stdDeviation="1.5"/></filter></defs><defs><linearGradient id="l37" x1="0" y1="0" x2="0.3" y2="1"><stop offset="0" stop-color="#e8e0b8"/><stop offset="0.4" stop-color="#a89868"/><stop offset="1" stop-color="#3a3018"/></linearGradient></defs><g filter="url(#sb)"><path d="M1 15 L8 20 L12 19 L5 13Z" fill="#3a3020"/><path d="M2 8 Q4 2 10 3 L18 7 Q21 10 19 15 L11 19 L3 14 Q0 12 2 8Z" fill="url(#l37)"/><ellipse cx="16.5" cy="12" rx="3.8" ry="5" transform="rotate(20 16.5 12)" fill="#a8a8a0"/><ellipse cx="16.5" cy="12" rx="2" ry="3" transform="rotate(20 16.5 12)" fill="#e8e8e0"/><path d="M4 6 L13 5" stroke="#f8f0d8" stroke-width="1" opacity="0.8"/><path d="M6 2 L8 4" stroke="#c0c0c0" stroke-width="0.6"/></g></svg>
<div class="t " style="left:845px;top:213px;">- 65.3</div>
<div class="t " style="left:845px;top:225px;">+87.1</div>
<div class="grp" style="left:653px;top:250px;width:70px;height:56px"></div>
<div class="t glab" style="left:661px;top:245px">Firepower</div>
<svg class="ic" style="left:656px;top:257px" width="30" height="22" viewBox="0 0 30 22"><defs><linearGradient id="l38" x1="0" y1="0" x2="0" y2="1"><stop offset="0" stop-color="#f0f0f0"/><stop offset="0.5" stop-color="#a0a0a0"/><stop offset="1" stop-color="#3a3a3a"/></linearGradient></defs><path d="M1 8 L14 4 L16 9 L3 12Z" fill="url(#l38)"/><path d="M2 11 L15 7.5" stroke="#505050" stroke-width="1"/><path d="M14 3 L20 1 L25 4 L24 13 L17 14Z" fill="url(#l38)"/><path d="M24 9 L29 11 L24 13Z" fill="#c0c0c0" opacity="0.6"/><path d="M14 14 L22 12 L23 19 L15 21 L12 18Z" fill="#7a7a7a"/><path d="M14 16 L21 14" stroke="#a8d8f0" stroke-width="1.5"/></svg>
<div class="t " style="left:685px;top:261px;">: 979</div>
<svg class="ic" style="left:658px;top:281px" width="26" height="20" viewBox="0 0 26 20"><defs><linearGradient id="l39" x1="0" y1="0" x2="1" y2="0"><stop offset="0" stop-color="#e6e6e6"/><stop offset="0.55" stop-color="#707070"/><stop offset="0.8" stop-color="#000"/><stop offset="1" stop-color="#000"/></linearGradient></defs><defs><linearGradient id="l40" x1="0" y1="0" x2="1" y2="0"><stop offset="0" stop-color="#e6e6e6"/><stop offset="0.6" stop-color="#c8d8d8"/><stop offset="1" stop-color="#e0f0f0"/></linearGradient></defs><path d="M2 4.5 Q10.5 3.5 17 3.5 Q19 4 19 5.5 Q19 7 17 7 Q10.5 7 2 5Z" fill="url(#l39)"/><path d="M5 3.5 Q12.2 2 16 2 Q18 2.5 18 4 L10.5 4Z" fill="url(#l40)"/><path d="M5 11.0 Q14.5 10.0 22 10.0 Q24 10.5 24 12.0 Q24 13.5 22 13.5 Q14.5 13.5 5 11.5Z" fill="url(#l39)"/><path d="M8 10.0 Q16.4 8.5 21 8.5 Q23 9.0 23 10.5 L14.5 10.5Z" fill="url(#l40)"/><path d="M1 17.0 Q8.0 16.0 13 16.0 Q15 16.5 15 18.0 Q15 19.5 13 19.5 Q8.0 19.5 1 17.5Z" fill="url(#l39)"/><path d="M4 16.0 Q9.4 14.5 12 14.5 Q14 15.0 14 16.5 L8.0 16.5Z" fill="url(#l40)"/></svg>
<div class="t " style="left:685px;top:285px;">: 1485</div>
<div class="grp" style="left:732px;top:250px;width:150px;height:56px"></div>
<div class="t glab" style="left:740px;top:245px">Targeting</div>
<svg class="ic" style="left:736px;top:256px" width="23" height="24" viewBox="0 0 23 24"><circle cx="11" cy="12.5" r="10" fill="#e8eef0" stroke="#a8b4bc" stroke-width="1.5"/><path d="M3 10 Q6 4 12 3" stroke="#c8d8e0" stroke-width="2" fill="none"/><path d="M11 13 L19 4" stroke="#405060" stroke-width="1.8"/><path d="M4 16 Q8 21 14 21" stroke="#98a4ac" stroke-width="1" fill="none"/></svg>
<div class="t " style="left:765px;top:261px;">: 87.5 km</div>
<svg class="ic" style="left:736px;top:280px" width="23" height="25" viewBox="0 0 23 25"><defs><linearGradient id="l41" x1="0" y1="0" x2="1" y2="1"><stop offset="0" stop-color="#f0e0c0"/><stop offset="0.5" stop-color="#a08058"/><stop offset="1" stop-color="#4a3420"/></linearGradient></defs><path d="M10 3 Q18 2 21 10 Q22 16 18 19 Q10 16 10 3Z" fill="url(#l41)"/><path d="M12 5 L19 17 M15 4 L16 18 M11 9 L20 12" stroke="#6a5030" stroke-width="0.7"/><path d="M13 13 L5 16 L1 14 M7 15 L4 22 M9 16 L10 23 M8 15 L13 21" stroke="#8a6a40" stroke-width="1.6" fill="none"/></svg>
<div class="t " style="left:765px;top:285px;">: 112.5 mm</div>
<svg class="ic" style="left:824px;top:256px" width="24" height="24" viewBox="0 0 24 24"><defs><filter id="sb" x="-30%" y="-30%" width="160%" height="160%"><feGaussianBlur stdDeviation="0.45"/></filter><filter id="sb2" x="-50%" y="-50%" width="200%" height="200%"><feGaussianBlur stdDeviation="1.5"/></filter></defs><defs><radialGradient id="r42" cx="0.45" cy="0.4" r="0.6"><stop offset="0" stop-color="#f0ece4" /><stop offset="0.6" stop-color="#d8d0c0" /><stop offset="0.85" stop-color="#a89880" /><stop offset="1" stop-color="#6a5a48" /></radialGradient></defs><g filter="url(#sb)"><circle cx="12" cy="12" r="9" fill="url(#r42)"/><circle cx="12" cy="12" r="5.5" fill="none" stroke="#a8a090" stroke-width="0.8"/><path d="M12 1 L12 23 M1 12 L23 12" stroke="#9a9080" stroke-width="0.9"/><path d="M12 0.5 L10.5 3 L13.5 3Z M12 23.5 L10.5 21 L13.5 21Z M0.5 12 L3 10.5 L3 13.5Z M23.5 12 L21 10.5 L21 13.5Z" fill="#8a7a68"/></g><path d="M14 19 Q19 18 20 13" stroke="#505050" stroke-width="1.5" fill="none" opacity="0.4" filter="url(#sb2)"/></svg>
<div class="t " style="left:853px;top:261px;">: 6</div>
<svg class="ic" style="left:826px;top:281px" width="22" height="22" viewBox="0 0 22 22"><circle cx="11" cy="11" r="9.5" fill="#f0f4f8" stroke="#a0a8b0" stroke-width="1"/><circle cx="11" cy="11" r="7" fill="none" stroke="#5a6a78" stroke-width="1.5"/><circle cx="11" cy="11" r="3.8" fill="none" stroke="#4a5a68" stroke-width="1.8"/><path d="M11 11 L14 8" stroke="#4a5a68" stroke-width="1.2"/></svg>
<div class="t " style="left:853px;top:285px;">: 22</div>
<div class="grp" style="left:653px;top:316px;width:229px;height:32px"></div>
<div class="t glab" style="left:661px;top:311px">Mobility</div>
<svg class="ic" style="left:658px;top:324px" width="22" height="19" viewBox="0 0 22 19"><defs><filter id="sb" x="-30%" y="-30%" width="160%" height="160%"><feGaussianBlur stdDeviation="0.45"/></filter><filter id="sb2" x="-50%" y="-50%" width="200%" height="200%"><feGaussianBlur stdDeviation="1.5"/></filter></defs><defs><linearGradient id="l43" x1="0" y1="0" x2="0.3" y2="1"><stop offset="0" stop-color="#f8f0e8"/><stop offset="0.5" stop-color="#c8b8a8"/><stop offset="1" stop-color="#5a4a3a"/></linearGradient></defs><defs><radialGradient id="r44" cx="0.6" cy="0.5" r="0.6"><stop offset="0" stop-color="#e0ffff" /><stop offset="0.5" stop-color="#40d8e8" /><stop offset="1" stop-color="#10a0b0" /></radialGradient></defs><ellipse cx="14" cy="11" rx="8" ry="6" fill="#60e0f0" opacity="0.5" filter="url(#sb2)"/><g filter="url(#sb)"><path d="M1.5 6 L8 1.5 Q11 0.5 12 2 L14 6 L6 12 Q3 13 2 11Z" fill="url(#l43)"/><path d="M2 9 Q3 12.5 6 12 L4 14 Q1 13 1 9Z" fill="#4a3a2a"/><path d="M8 4 L14 6 L6 12Z" fill="#a09080" opacity="0.6"/><path d="M12 2 L19 9 Q20 13 17 15 L10 16 L6 12 L14 6Z" fill="url(#r44)"/><path d="M14 8 L18 11" stroke="#ffffff" stroke-width="1.2" opacity="0.8"/></g></svg>
<div class="t " style="left:683px;top:327px;">: 125 m/s</div>
<svg class="ic" style="left:739px;top:320px" width="26" height="26" viewBox="0 0 26 26"><defs><filter id="sb" x="-30%" y="-30%" width="160%" height="160%"><feGaussianBlur stdDeviation="0.45"/></filter><filter id="sb2" x="-50%" y="-50%" width="200%" height="200%"><feGaussianBlur stdDeviation="1.5"/></filter></defs><defs><radialGradient id="r45" cx="0.4" cy="0.4" r="0.6"><stop offset="0" stop-color="#d8ecfc" /><stop offset="0.6" stop-color="#88b4dc" /><stop offset="1" stop-color="#4a78a8" /></radialGradient></defs><g filter="url(#sb)"><path d="M7 17 L2 25 M10.5 17 L7 25 M14 17 L12.5 25 M17.5 17 L18 25 M21 16 L23.5 24" stroke="#5a8ac0" stroke-width="1.8"/><path d="M3 24.5 L24 22" stroke="#7aa4d0" stroke-width="1"/><circle cx="13" cy="11.5" r="7.5" fill="url(#r45)" stroke="#3a5a80" stroke-width="1.2"/><path d="M13 11.5 L13 6.5" stroke="#1a3050" stroke-width="1.3"/><rect x="11.5" y="1" width="3" height="3" fill="#5a6a80"/><path d="M19 5 L21 3.5" stroke="#5a6a80" stroke-width="1.5"/></g></svg>
<div class="t " style="left:766px;top:327px;">: 15.7 s</div>
<svg class="ic" style="left:806px;top:323px" width="22" height="22" viewBox="0 0 22 22"><defs><filter id="sb" x="-30%" y="-30%" width="160%" height="160%"><feGaussianBlur stdDeviation="0.45"/></filter><filter id="sb2" x="-50%" y="-50%" width="200%" height="200%"><feGaussianBlur stdDeviation="1.5"/></filter></defs><defs><radialGradient id="r46" cx="0.45" cy="0.45" r="0.6"><stop offset="0" stop-color="#f0e8e0" /><stop offset="0.6" stop-color="#9a8a78" /><stop offset="1" stop-color="#3a3028" /></radialGradient></defs><ellipse cx="9" cy="8" rx="8" ry="7" fill="#50d8e0" opacity="0.6" filter="url(#sb2)"/><g filter="url(#sb)"><path d="M3 6 L10 2 L15 4 L18 12 L14 19 L7 18 L3 12Z" fill="#7ae0e8" opacity="0.7"/><path d="M5 9 Q9 5 14 7 L17 14 Q13 19 8 17Z" fill="url(#r46)"/><ellipse cx="10.5" cy="12" rx="3.5" ry="4" fill="#e8e0d8"/><ellipse cx="10.5" cy="12" rx="1.8" ry="2.3" fill="#4a4038"/><path d="M14 9 L18 15 L15 20 L12 18" fill="#5a4a3a"/><path d="M8 18 L10 21 L13 20" stroke="#3a3028" stroke-width="1.5" fill="none"/></g></svg>
<div class="t " style="left:828px;top:327px;">: 3 au/s</div>
<div class="t " style="left:652px;top:361px;">Signature: 420 m2</div>
<div class="t " style="left:773px;top:361px;">Cargohold: 600 m3</div>
<div class="t " style="left:652px;top:377px;">Dronebay: 150 / 375 m3</div>
<div style="position:absolute;left:640px;top:400px;width:270px;height:360px;background:#1e1e1e;border-radius:6px 6px 0 0"></div>
<div style="position:absolute;left:641px;top:401px;width:269px;height:28px;background:linear-gradient(#8a8a8a 0,#6e6e6e 1px,#5a5a5a 13px,#3e3e3e 13px,#2a2a2a 28px);border-radius:5px 5px 0 0"></div>
<div style="position:absolute;left:641px;top:429px;width:3px;height:331px;background:#3a3a3a"></div>
<svg class="ic" style="left:646px;top:408px" width="15" height="16" viewBox="0 0 15 16"><defs><filter id="sb" x="-30%" y="-30%" width="160%" height="160%"><feGaussianBlur stdDeviation="0.45"/></filter><filter id="sb2" x="-50%" y="-50%" width="200%" height="200%"><feGaussianBlur stdDeviation="1.5"/></filter></defs><g filter="url(#sb)"><path d="M1 4.5 L4.5 1 L6 1.5 L6.5 11.5 L3 14.5 L1.5 14Z" fill="#6a4a20"/><path d="M1.2 4.8 L4.6 1.3 L5.4 1.6 L2.6 4.8 L3 14 L1.7 13.8Z" fill="#f8ecd8"/><path d="M5 4.5 L8.5 1 L10 1.5 L10.5 11.5 L7 14.5 L5.5 14Z" fill="#6a4a20"/><path d="M5.2 4.8 L8.6 1.3 L9.4 1.6 L6.6 4.8 L7 14 L5.7 13.8Z" fill="#f8ecd8"/><path d="M9 4.5 L12.5 1 L14 1.5 L14.5 11.5 L11 14.5 L9.5 14Z" fill="#6a4a20"/><path d="M9.2 4.8 L12.6 1.3 L13.4 1.6 L10.6 4.8 L11 14 L9.7 13.8Z" fill="#f8ecd8"/><path d="M10 4.5 L13 2 L13.5 11 L10.8 13.5Z" fill="#d0a870"/><path d="M11 6 L12.5 5 M11 8 L12.8 7 M11 10 L12.8 9" stroke="#f0d8a8" stroke-width="0.7"/></g></svg>
<div class="t b" style="left:665px;top:411px;font-size:11px;color:#fff;transform:none;letter-spacing:0.15px">Character Editor</div>
<div style="position:absolute;left:644px;top:430px;width:266px;height:330px;background:#e6e6e6"></div>
<div class="grp" style="left:648px;top:436px;width:260px;height:38px"></div>
<div class="t glab" style="left:657px;top:431px">Character</div>
<div style="position:absolute;left:658px;top:445px;width:252px;height:21px;border:1px solid #8c8c8c;border-right:none;background:#fff;box-sizing:border-box"></div>
<div class="t " style="left:662px;top:450px;">MellaRinn</div>
<div class="t " style="left:729px;top:484px;">Skills</div>
<div style="position:absolute;left:840px;top:482px;width:70px;height:15px;border:1px solid #8a8a8a;border-right:none;border-radius:4px 0 0 4px;box-sizing:border-box;background:linear-gradient(#f0f0f0,#d8d8d8)"></div>
<div style="position:absolute;left:648px;top:503px;width:262px;height:257px;border:1px solid #8f8f8f;border-right:none;background:#fff;box-sizing:border-box"></div>
<div style="position:absolute;left:661px;top:518px;width:1px;height:139px;background:repeating-linear-gradient(#808080 0,#808080 1px,transparent 1px,transparent 2px)"></div>
<div style="position:absolute;left:657px;top:509px;width:9px;height:9px;border:1px solid #8a8a8a;box-sizing:border-box;background:linear-gradient(135deg,#fff,#d0d0d0)"></div>
<div style="position:absolute;left:659px;top:513px;width:5px;height:1px;background:#000"></div>
<div style="position:absolute;left:661px;top:511px;width:1px;height:5px;background:#000"></div>
<div style="position:absolute;left:667px;top:513px;width:6px;height:1px;background:repeating-linear-gradient(90deg,#808080 0,#808080 1px,transparent 1px,transparent 2px)"></div>
<div class="t " style="left:693px;top:507px;">Slot 1</div>
<div style="position:absolute;left:657px;top:525px;width:9px;height:9px;border:1px solid #8a8a8a;box-sizing:border-box;background:linear-gradient(135deg,#fff,#d0d0d0)"></div>
<div style="position:absolute;left:659px;top:529px;width:5px;height:1px;background:#000"></div>
<div style="position:absolute;left:661px;top:527px;width:1px;height:5px;background:#000"></div>
<div style="position:absolute;left:667px;top:529px;width:6px;height:1px;background:repeating-linear-gradient(90deg,#808080 0,#808080 1px,transparent 1px,transparent 2px)"></div>
<div class="t " style="left:693px;top:523px;">Slot 2</div>
<div style="position:absolute;left:657px;top:541px;width:9px;height:9px;border:1px solid #8a8a8a;box-sizing:border-box;background:linear-gradient(135deg,#fff,#d0d0d0)"></div>
<div style="position:absolute;left:659px;top:545px;width:5px;height:1px;background:#000"></div>
<div style="position:absolute;left:661px;top:543px;width:1px;height:5px;background:#000"></div>
<div style="position:absolute;left:667px;top:545px;width:6px;height:1px;background:repeating-linear-gradient(90deg,#808080 0,#808080 1px,transparent 1px,transparent 2px)"></div>
<div class="t " style="left:693px;top:539px;">Slot 3</div>
<div style="position:absolute;left:657px;top:557px;width:9px;height:9px;border:1px solid #8a8a8a;box-sizing:border-box;background:linear-gradient(135deg,#fff,#d0d0d0)"></div>
<div style="position:absolute;left:659px;top:561px;width:5px;height:1px;background:#000"></div>
<div style="position:absolute;left:661px;top:559px;width:1px;height:5px;background:#000"></div>
<div style="position:absolute;left:667px;top:561px;width:6px;height:1px;background:repeating-linear-gradient(90deg,#808080 0,#808080 1px,transparent 1px,transparent 2px)"></div>
<div class="t " style="left:693px;top:555px;">Slot 4</div>
<div style="position:absolute;left:657px;top:573px;width:9px;height:9px;border:1px solid #8a8a8a;box-sizing:border-box;background:linear-gradient(135deg,#fff,#d0d0d0)"></div>
<div style="position:absolute;left:659px;top:577px;width:5px;height:1px;background:#000"></div>
<div style="position:absolute;left:661px;top:575px;width:1px;height:5px;background:#000"></div>
<div style="position:absolute;left:667px;top:577px;width:6px;height:1px;background:repeating-linear-gradient(90deg,#808080 0,#808080 1px,transparent 1px,transparent 2px)"></div>
<div class="t " style="left:693px;top:571px;">Slot 5</div>
<div style="position:absolute;left:657px;top:589px;width:9px;height:9px;border:1px solid #8a8a8a;box-sizing:border-box;background:linear-gradient(135deg,#fff,#d0d0d0)"></div>
<div style="position:absolute;left:659px;top:593px;width:5px;height:1px;background:#000"></div>
<div style="position:absolute;left:661px;top:591px;width:1px;height:5px;background:#000"></div>
<div style="position:absolute;left:667px;top:593px;width:6px;height:1px;background:repeating-linear-gradient(90deg,#808080 0,#808080 1px,transparent 1px,transparent 2px)"></div>
<div style="position:absolute;left:691px;top:588px;width:219px;height:13px;background:#cccccc;border:1px dotted #333;border-right:none;box-sizing:border-box"></div>
<svg class="ic" style="left:674px;top:585px" width="14" height="16" viewBox="0 0 14 16"><defs><filter id="sb" x="-30%" y="-30%" width="160%" height="160%"><feGaussianBlur stdDeviation="0.45"/></filter><filter id="sb2" x="-50%" y="-50%" width="200%" height="200%"><feGaussianBlur stdDeviation="1.5"/></filter></defs><defs><linearGradient id="l47" x1="0" y1="0" x2="1" y2="0"><stop offset="0" stop-color="#4a4a30"/><stop offset="0.35" stop-color="#a8a878"/><stop offset="0.7" stop-color="#6a6a48"/><stop offset="1" stop-color="#3a3a28"/></linearGradient></defs><path d="M8 11 L13 14 L9 15.5 L4 14Z" fill="#9a9a9a" opacity="0.7" filter="url(#sb)"/><g filter="url(#sb)"><path d="M2 2 Q6 0.5 10 2 L10.5 13 Q6 14.5 2 13Z" fill="url(#l47)"/><path d="M2 2 Q6 0.5 10 2 L10 3.5 Q6 2 2 3.5Z" fill="#a8d860"/><path d="M3.5 6 L8.5 6 L8.5 11 L3.5 11Z" fill="#3a3620" opacity="0.8"/><path d="M4.5 7 L7.5 10" stroke="#d8d8b0" stroke-width="0.9"/></g></svg>
<div class="t " style="left:693px;top:587px;">Hardwiring - Inherent Implants 'Noble' ZET10</div>
<div style="position:absolute;left:657px;top:605px;width:9px;height:9px;border:1px solid #8a8a8a;box-sizing:border-box;background:linear-gradient(135deg,#fff,#d0d0d0)"></div>
<div style="position:absolute;left:659px;top:609px;width:5px;height:1px;background:#000"></div>
<div style="position:absolute;left:661px;top:607px;width:1px;height:5px;background:#000"></div>
<div style="position:absolute;left:667px;top:609px;width:6px;height:1px;background:repeating-linear-gradient(90deg,#808080 0,#808080 1px,transparent 1px,transparent 2px)"></div>
<svg class="ic" style="left:674px;top:601px" width="14" height="16" viewBox="0 0 14 16"><defs><filter id="sb" x="-30%" y="-30%" width="160%" height="160%"><feGaussianBlur stdDeviation="0.45"/></filter><filter id="sb2" x="-50%" y="-50%" width="200%" height="200%"><feGaussianBlur stdDeviation="1.5"/></filter></defs><defs><linearGradient id="l48" x1="0" y1="0" x2="1" y2="0"><stop offset="0" stop-color="#4a4a30"/><stop offset="0.35" stop-color="#a8a878"/><stop offset="0.7" stop-color="#6a6a48"/><stop offset="1" stop-color="#3a3a28"/></linearGradient></defs><path d="M8 11 L13 14 L9 15.5 L4 14Z" fill="#9a9a9a" opacity="0.7" filter="url(#sb)"/><g filter="url(#sb)"><path d="M2 2 Q6 0.5 10 2 L10.5 13 Q6 14.5 2 13Z" fill="url(#l48)"/><path d="M2 2 Q6 0.5 10 2 L10 3.5 Q6 2 2 3.5Z" fill="#a8d860"/><path d="M3.5 6 L8.5 6 L8.5 11 L3.5 11Z" fill="#3a3620" opacity="0.8"/><path d="M4.5 7 L7.5 10" stroke="#d8d8b0" stroke-width="0.9"/></g></svg>
<div class="t " style="left:693px;top:603px;">Hardwiring - Inherent Implants 'Gentry' ZEX20</div>
<div style="position:absolute;left:657px;top:621px;width:9px;height:9px;border:1px solid #8a8a8a;box-sizing:border-box;background:linear-gradient(135deg,#fff,#d0d0d0)"></div>
<div style="position:absolute;left:659px;top:625px;width:5px;height:1px;background:#000"></div>
<div style="position:absolute;left:661px;top:623px;width:1px;height:5px;background:#000"></div>
<div style="position:absolute;left:667px;top:625px;width:6px;height:1px;background:repeating-linear-gradient(90deg,#808080 0,#808080 1px,transparent 1px,transparent 2px)"></div>
<svg class="ic" style="left:674px;top:617px" width="14" height="16" viewBox="0 0 14 16"><defs><filter id="sb" x="-30%" y="-30%" width="160%" height="160%"><feGaussianBlur stdDeviation="0.45"/></filter><filter id="sb2" x="-50%" y="-50%" width="200%" height="200%"><feGaussianBlur stdDeviation="1.5"/></filter></defs><defs><linearGradient id="l49" x1="0" y1="0" x2="1" y2="0"><stop offset="0" stop-color="#4a4a30"/><stop offset="0.35" stop-color="#a8a878"/><stop offset="0.7" stop-color="#6a6a48"/><stop offset="1" stop-color="#3a3a28"/></linearGradient></defs><path d="M8 11 L13 14 L9 15.5 L4 14Z" fill="#9a9a9a" opacity="0.7" filter="url(#sb)"/><g filter="url(#sb)"><path d="M2 2 Q6 0.5 10 2 L10.5 13 Q6 14.5 2 13Z" fill="url(#l49)"/><path d="M2 2 Q6 0.5 10 2 L10 3.5 Q6 2 2 3.5Z" fill="#a8d860"/><path d="M3.5 6 L8.5 6 L8.5 11 L3.5 11Z" fill="#3a3620" opacity="0.8"/><path d="M4.5 7 L7.5 10" stroke="#d8d8b0" stroke-width="0.9"/></g></svg>
<div class="t " style="left:693px;top:619px;">Hardwiring - Inherent Implants 'Noble' ZET30</div>
<div style="position:absolute;left:657px;top:637px;width:9px;height:9px;border:1px solid #8a8a8a;box-sizing:border-box;background:linear-gradient(135deg,#fff,#d0d0d0)"></div>
<div style="position:absolute;left:659px;top:641px;width:5px;height:1px;background:#000"></div>
<div style="position:absolute;left:661px;top:639px;width:1px;height:5px;background:#000"></div>
<div style="position:absolute;left:667px;top:641px;width:6px;height:1px;background:repeating-linear-gradient(90deg,#808080 0,#808080 1px,transparent 1px,transparent 2px)"></div>
<svg class="ic" style="left:674px;top:633px" width="14" height="16" viewBox="0 0 14 16"><defs><filter id="sb" x="-30%" y="-30%" width="160%" height="160%"><feGaussianBlur stdDeviation="0.45"/></filter><filter id="sb2" x="-50%" y="-50%" width="200%" height="200%"><feGaussianBlur stdDeviation="1.5"/></filter></defs><defs><linearGradient id="l50" x1="0" y1="0" x2="1" y2="0"><stop offset="0" stop-color="#4a4a30"/><stop offset="0.35" stop-color="#a8a878"/><stop offset="0.7" stop-color="#6a6a48"/><stop offset="1" stop-color="#3a3a28"/></linearGradient></defs><path d="M8 11 L13 14 L9 15.5 L4 14Z" fill="#9a9a9a" opacity="0.7" filter="url(#sb)"/><g filter="url(#sb)"><path d="M2 2 Q6 0.5 10 2 L10.5 13 Q6 14.5 2 13Z" fill="url(#l50)"/><path d="M2 2 Q6 0.5 10 2 L10 3.5 Q6 2 2 3.5Z" fill="#a8d860"/><path d="M3.5 6 L8.5 6 L8.5 11 L3.5 11Z" fill="#3a3620" opacity="0.8"/><path d="M4.5 7 L7.5 10" stroke="#d8d8b0" stroke-width="0.9"/></g></svg>
<div class="t " style="left:693px;top:635px;">Hardwiring - Inherent Implants 'Noble' ZET40</div>
<div style="position:absolute;left:657px;top:653px;width:9px;height:9px;border:1px solid #8a8a8a;box-sizing:border-box;background:linear-gradient(135deg,#fff,#d0d0d0)"></div>
<div style="position:absolute;left:659px;top:657px;width:5px;height:1px;background:#000"></div>
<div style="position:absolute;left:661px;top:655px;width:1px;height:5px;background:#000"></div>
<div style="position:absolute;left:667px;top:657px;width:6px;height:1px;background:repeating-linear-gradient(90deg,#808080 0,#808080 1px,transparent 1px,transparent 2px)"></div>
<svg class="ic" style="left:674px;top:649px" width="14" height="16" viewBox="0 0 14 16"><defs><filter id="sb" x="-30%" y="-30%" width="160%" height="160%"><feGaussianBlur stdDeviation="0.45"/></filter><filter id="sb2" x="-50%" y="-50%" width="200%" height="200%"><feGaussianBlur stdDeviation="1.5"/></filter></defs><defs><linearGradient id="l51" x1="0" y1="0" x2="1" y2="0"><stop offset="0" stop-color="#4a4a30"/><stop offset="0.35" stop-color="#a8a878"/><stop offset="0.7" stop-color="#6a6a48"/><stop offset="1" stop-color="#3a3a28"/></linearGradient></defs><path d="M8 11 L13 14 L9 15.5 L4 14Z" fill="#9a9a9a" opacity="0.7" filter="url(#sb)"/><g filter="url(#sb)"><path d="M2 2 Q6 0.5 10 2 L10.5 13 Q6 14.5 2 13Z" fill="url(#l51)"/><path d="M2 2 Q6 0.5 10 2 L10 3.5 Q6 2 2 3.5Z" fill="#a8d860"/><path d="M3.5 6 L8.5 6 L8.5 11 L3.5 11Z" fill="#3a3620" opacity="0.8"/><path d="M4.5 7 L7.5 10" stroke="#d8d8b0" stroke-width="0.9"/></g></svg>
<div class="t " style="left:693px;top:651px;">Hardwiring - Zainou 'Gnome' KZA2000</div></body></html>
